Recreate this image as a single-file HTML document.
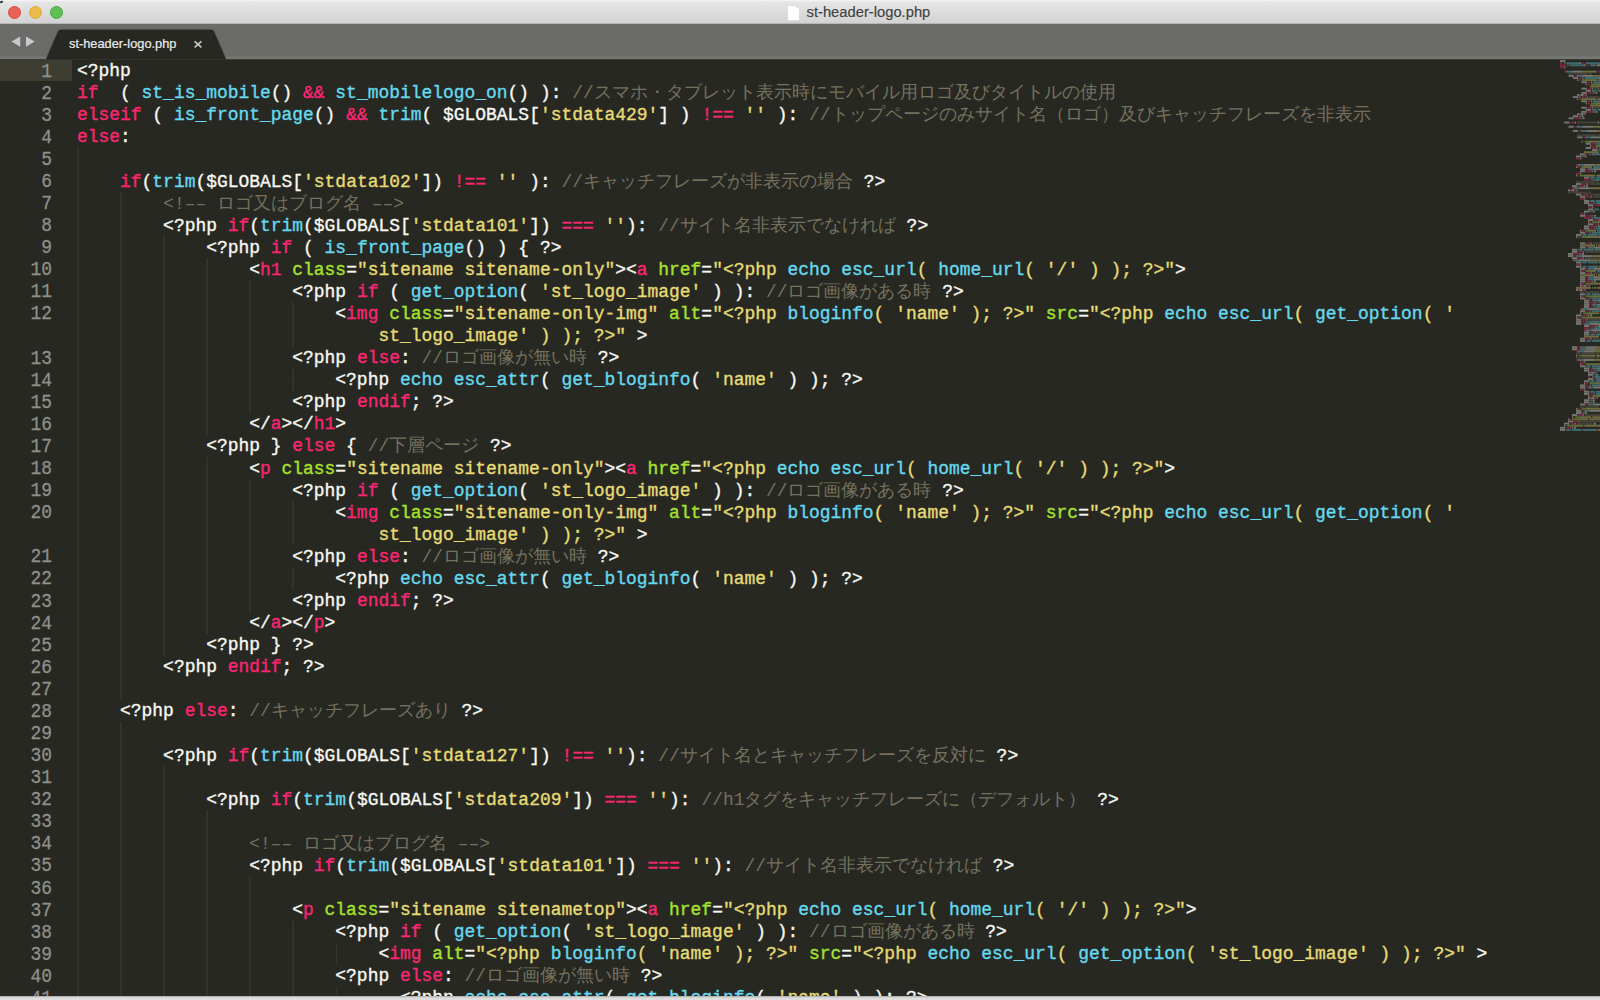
<!DOCTYPE html>
<html><head><meta charset="utf-8">
<style>
html,body{margin:0;padding:0;}
body{width:1600px;height:1000px;overflow:hidden;position:relative;background:#272822;font-family:"Liberation Mono",monospace;}
#title{position:absolute;left:0;top:0;width:1600px;height:24px;background:linear-gradient(#f7f7f7 0,#e6e6e6 2px,#d2d2d2 23px,#9a9a9a 24px);}
#title .t{position:absolute;left:806.5px;top:4px;font-family:"Liberation Sans",sans-serif;font-size:14.75px;color:#404040;-webkit-text-stroke:0.15px #404040;}
.tl{position:absolute;top:5.5px;width:13px;height:13px;border-radius:50%;}
#tabbar{position:absolute;left:0;top:24px;width:1600px;height:36px;background:linear-gradient(#6b6b69 0,#6b6b69 32.4px,#787873 32.6px,#777772 35.2px,#272822 35.6px);}
#tabs{position:absolute;left:0;top:24px;}
.tabtxt{position:absolute;left:69px;top:35.8px;font-family:"Liberation Sans",sans-serif;font-size:12.8px;color:#ececec;-webkit-text-stroke:0.2px #ececec;}
#editor{position:absolute;left:0;top:59.6px;width:1600px;height:935px;background:#272822;}
.ln{position:absolute;left:77.0px;margin-top:0.5px;-webkit-text-stroke:0.35px currentColor;height:22.08px;line-height:22.08px;font-size:17.945px;white-space:pre;color:#f8f8f2;}
.ln span{-webkit-text-stroke:0.35px currentColor;}
.ln span.c{-webkit-text-stroke:0;transform:none;}
.ln span{display:inline-block;transform:scaleY(1.07);transform-origin:0 16.9px;}
.num{position:absolute;left:0;width:52px;text-align:right;height:22.08px;line-height:22.08px;font-size:17.945px;color:#90908a;-webkit-text-stroke:0.25px #90908a;transform:translateY(0.7px) scaleY(1.1);transform-origin:0 16.6px;}
.curbg{position:absolute;left:0;top:59.8px;width:72px;height:21.2px;background:#3e3d32;}
.g{position:absolute;width:1.6px;margin-left:0.1px;height:22.08px;background:#33332c;}
.k{color:#f92672}.f{color:#66d9ef}.s{color:#e6db74}.a{color:#a6e22e}.c{color:#75715e}
#bottom{position:absolute;left:0;top:995.5px;width:1600px;height:4.5px;background:linear-gradient(#b4b4b4 0,#bcbcbc 1.3px,#dcdcdc 1.6px,#e0e0e0 100%);}
</style></head><body>
<div id="title">
 <div style="position:absolute;left:0;top:0.8px;width:2.6px;height:1.6px;background:#2a2a38;border-radius:0 1px 1px 0;transform:rotate(-20deg)"></div>
 <div class="tl" style="left:8px;background:#ec6158;border:0.6px solid #d64a40;box-sizing:border-box"></div>
 <div class="tl" style="left:29px;background:#ebbb4e;border:0.6px solid #dba83c;box-sizing:border-box"></div>
 <div class="tl" style="left:50px;background:#5ec153;border:0.6px solid #44a83b;box-sizing:border-box"></div>
 <svg style="position:absolute;left:787px;top:5px" width="13" height="16" viewBox="0 0 13 16"><path d="M0.5 0.5H8.5L12.5 4.5V15.5H0.5Z" fill="#fff" stroke="#d0d0d0" stroke-width="0.6"/></svg>
 <div class="t">st-header-logo.php</div>
</div>
<div id="tabbar"></div>
<svg id="tabs" width="260" height="36" viewBox="0 0 260 36">
 <path d="M45.3 36.2L57.6 7.6Q58.9 5.3 62 5.3L210 5.3Q213.1 5.3 214.4 7.6L226.7 36.2Z" fill="#272822" stroke="#5e5e5c" stroke-width="0.6"/>
 <path d="M20.2 12.5L11.5 17.6L20.2 22.8Z" fill="#c9c9c9"/>
 <path d="M26 12.5L34.7 17.6L26 22.8Z" fill="#c9c9c9"/>
 <path d="M194.6 17.3L201.4 23.4M201.4 17.3L194.6 23.4" stroke="#c4c4bc" stroke-width="1.7"/>
</svg>
<div class="tabtxt">st-header-logo.php</div>
<div id="editor"></div>
<div class="curbg"></div>
<div class="g" style="left:77.00px;top:147.92px"></div>
<div class="g" style="left:77.00px;top:170.00px"></div>
<div class="g" style="left:77.00px;top:192.08px"></div>
<div class="g" style="left:120.08px;top:192.08px"></div>
<div class="g" style="left:77.00px;top:214.16px"></div>
<div class="g" style="left:120.08px;top:214.16px"></div>
<div class="g" style="left:77.00px;top:236.24px"></div>
<div class="g" style="left:120.08px;top:236.24px"></div>
<div class="g" style="left:163.15px;top:236.24px"></div>
<div class="g" style="left:77.00px;top:258.32px"></div>
<div class="g" style="left:120.08px;top:258.32px"></div>
<div class="g" style="left:163.15px;top:258.32px"></div>
<div class="g" style="left:206.23px;top:258.32px"></div>
<div class="g" style="left:77.00px;top:280.40px"></div>
<div class="g" style="left:120.08px;top:280.40px"></div>
<div class="g" style="left:163.15px;top:280.40px"></div>
<div class="g" style="left:206.23px;top:280.40px"></div>
<div class="g" style="left:249.30px;top:280.40px"></div>
<div class="g" style="left:77.00px;top:302.48px"></div>
<div class="g" style="left:120.08px;top:302.48px"></div>
<div class="g" style="left:163.15px;top:302.48px"></div>
<div class="g" style="left:206.23px;top:302.48px"></div>
<div class="g" style="left:249.30px;top:302.48px"></div>
<div class="g" style="left:292.38px;top:302.48px"></div>
<div class="g" style="left:77.00px;top:324.56px"></div>
<div class="g" style="left:120.08px;top:324.56px"></div>
<div class="g" style="left:163.15px;top:324.56px"></div>
<div class="g" style="left:206.23px;top:324.56px"></div>
<div class="g" style="left:249.30px;top:324.56px"></div>
<div class="g" style="left:292.38px;top:324.56px"></div>
<div class="g" style="left:77.00px;top:346.64px"></div>
<div class="g" style="left:120.08px;top:346.64px"></div>
<div class="g" style="left:163.15px;top:346.64px"></div>
<div class="g" style="left:206.23px;top:346.64px"></div>
<div class="g" style="left:249.30px;top:346.64px"></div>
<div class="g" style="left:77.00px;top:368.72px"></div>
<div class="g" style="left:120.08px;top:368.72px"></div>
<div class="g" style="left:163.15px;top:368.72px"></div>
<div class="g" style="left:206.23px;top:368.72px"></div>
<div class="g" style="left:249.30px;top:368.72px"></div>
<div class="g" style="left:292.38px;top:368.72px"></div>
<div class="g" style="left:77.00px;top:390.80px"></div>
<div class="g" style="left:120.08px;top:390.80px"></div>
<div class="g" style="left:163.15px;top:390.80px"></div>
<div class="g" style="left:206.23px;top:390.80px"></div>
<div class="g" style="left:249.30px;top:390.80px"></div>
<div class="g" style="left:77.00px;top:412.88px"></div>
<div class="g" style="left:120.08px;top:412.88px"></div>
<div class="g" style="left:163.15px;top:412.88px"></div>
<div class="g" style="left:206.23px;top:412.88px"></div>
<div class="g" style="left:77.00px;top:434.96px"></div>
<div class="g" style="left:120.08px;top:434.96px"></div>
<div class="g" style="left:163.15px;top:434.96px"></div>
<div class="g" style="left:77.00px;top:457.04px"></div>
<div class="g" style="left:120.08px;top:457.04px"></div>
<div class="g" style="left:163.15px;top:457.04px"></div>
<div class="g" style="left:206.23px;top:457.04px"></div>
<div class="g" style="left:77.00px;top:479.12px"></div>
<div class="g" style="left:120.08px;top:479.12px"></div>
<div class="g" style="left:163.15px;top:479.12px"></div>
<div class="g" style="left:206.23px;top:479.12px"></div>
<div class="g" style="left:249.30px;top:479.12px"></div>
<div class="g" style="left:77.00px;top:501.20px"></div>
<div class="g" style="left:120.08px;top:501.20px"></div>
<div class="g" style="left:163.15px;top:501.20px"></div>
<div class="g" style="left:206.23px;top:501.20px"></div>
<div class="g" style="left:249.30px;top:501.20px"></div>
<div class="g" style="left:292.38px;top:501.20px"></div>
<div class="g" style="left:77.00px;top:523.28px"></div>
<div class="g" style="left:120.08px;top:523.28px"></div>
<div class="g" style="left:163.15px;top:523.28px"></div>
<div class="g" style="left:206.23px;top:523.28px"></div>
<div class="g" style="left:249.30px;top:523.28px"></div>
<div class="g" style="left:292.38px;top:523.28px"></div>
<div class="g" style="left:77.00px;top:545.36px"></div>
<div class="g" style="left:120.08px;top:545.36px"></div>
<div class="g" style="left:163.15px;top:545.36px"></div>
<div class="g" style="left:206.23px;top:545.36px"></div>
<div class="g" style="left:249.30px;top:545.36px"></div>
<div class="g" style="left:77.00px;top:567.44px"></div>
<div class="g" style="left:120.08px;top:567.44px"></div>
<div class="g" style="left:163.15px;top:567.44px"></div>
<div class="g" style="left:206.23px;top:567.44px"></div>
<div class="g" style="left:249.30px;top:567.44px"></div>
<div class="g" style="left:292.38px;top:567.44px"></div>
<div class="g" style="left:77.00px;top:589.52px"></div>
<div class="g" style="left:120.08px;top:589.52px"></div>
<div class="g" style="left:163.15px;top:589.52px"></div>
<div class="g" style="left:206.23px;top:589.52px"></div>
<div class="g" style="left:249.30px;top:589.52px"></div>
<div class="g" style="left:77.00px;top:611.60px"></div>
<div class="g" style="left:120.08px;top:611.60px"></div>
<div class="g" style="left:163.15px;top:611.60px"></div>
<div class="g" style="left:206.23px;top:611.60px"></div>
<div class="g" style="left:77.00px;top:633.68px"></div>
<div class="g" style="left:120.08px;top:633.68px"></div>
<div class="g" style="left:163.15px;top:633.68px"></div>
<div class="g" style="left:77.00px;top:655.76px"></div>
<div class="g" style="left:120.08px;top:655.76px"></div>
<div class="g" style="left:77.00px;top:677.84px"></div>
<div class="g" style="left:120.08px;top:677.84px"></div>
<div class="g" style="left:77.00px;top:699.92px"></div>
<div class="g" style="left:77.00px;top:722.00px"></div>
<div class="g" style="left:120.08px;top:722.00px"></div>
<div class="g" style="left:77.00px;top:744.08px"></div>
<div class="g" style="left:120.08px;top:744.08px"></div>
<div class="g" style="left:77.00px;top:766.16px"></div>
<div class="g" style="left:120.08px;top:766.16px"></div>
<div class="g" style="left:163.15px;top:766.16px"></div>
<div class="g" style="left:77.00px;top:788.24px"></div>
<div class="g" style="left:120.08px;top:788.24px"></div>
<div class="g" style="left:163.15px;top:788.24px"></div>
<div class="g" style="left:77.00px;top:810.32px"></div>
<div class="g" style="left:120.08px;top:810.32px"></div>
<div class="g" style="left:163.15px;top:810.32px"></div>
<div class="g" style="left:206.23px;top:810.32px"></div>
<div class="g" style="left:77.00px;top:832.40px"></div>
<div class="g" style="left:120.08px;top:832.40px"></div>
<div class="g" style="left:163.15px;top:832.40px"></div>
<div class="g" style="left:206.23px;top:832.40px"></div>
<div class="g" style="left:77.00px;top:854.48px"></div>
<div class="g" style="left:120.08px;top:854.48px"></div>
<div class="g" style="left:163.15px;top:854.48px"></div>
<div class="g" style="left:206.23px;top:854.48px"></div>
<div class="g" style="left:77.00px;top:876.56px"></div>
<div class="g" style="left:120.08px;top:876.56px"></div>
<div class="g" style="left:163.15px;top:876.56px"></div>
<div class="g" style="left:206.23px;top:876.56px"></div>
<div class="g" style="left:249.30px;top:876.56px"></div>
<div class="g" style="left:77.00px;top:898.64px"></div>
<div class="g" style="left:120.08px;top:898.64px"></div>
<div class="g" style="left:163.15px;top:898.64px"></div>
<div class="g" style="left:206.23px;top:898.64px"></div>
<div class="g" style="left:249.30px;top:898.64px"></div>
<div class="g" style="left:77.00px;top:920.72px"></div>
<div class="g" style="left:120.08px;top:920.72px"></div>
<div class="g" style="left:163.15px;top:920.72px"></div>
<div class="g" style="left:206.23px;top:920.72px"></div>
<div class="g" style="left:249.30px;top:920.72px"></div>
<div class="g" style="left:292.38px;top:920.72px"></div>
<div class="g" style="left:77.00px;top:942.80px"></div>
<div class="g" style="left:120.08px;top:942.80px"></div>
<div class="g" style="left:163.15px;top:942.80px"></div>
<div class="g" style="left:206.23px;top:942.80px"></div>
<div class="g" style="left:249.30px;top:942.80px"></div>
<div class="g" style="left:292.38px;top:942.80px"></div>
<div class="g" style="left:335.46px;top:942.80px"></div>
<div class="g" style="left:77.00px;top:964.88px"></div>
<div class="g" style="left:120.08px;top:964.88px"></div>
<div class="g" style="left:163.15px;top:964.88px"></div>
<div class="g" style="left:206.23px;top:964.88px"></div>
<div class="g" style="left:249.30px;top:964.88px"></div>
<div class="g" style="left:292.38px;top:964.88px"></div>
<div class="g" style="left:77.00px;top:986.96px"></div>
<div class="g" style="left:120.08px;top:986.96px"></div>
<div class="g" style="left:163.15px;top:986.96px"></div>
<div class="g" style="left:206.23px;top:986.96px"></div>
<div class="g" style="left:249.30px;top:986.96px"></div>
<div class="g" style="left:292.38px;top:986.96px"></div>
<div class="g" style="left:335.46px;top:986.96px"></div>
<div class="num cur" style="top:59.60px">1</div>
<div class="num" style="top:81.68px">2</div>
<div class="num" style="top:103.76px">3</div>
<div class="num" style="top:125.84px">4</div>
<div class="num" style="top:147.92px">5</div>
<div class="num" style="top:170.00px">6</div>
<div class="num" style="top:192.08px">7</div>
<div class="num" style="top:214.16px">8</div>
<div class="num" style="top:236.24px">9</div>
<div class="num" style="top:258.32px">10</div>
<div class="num" style="top:280.40px">11</div>
<div class="num" style="top:302.48px">12</div>
<div class="num" style="top:346.64px">13</div>
<div class="num" style="top:368.72px">14</div>
<div class="num" style="top:390.80px">15</div>
<div class="num" style="top:412.88px">16</div>
<div class="num" style="top:434.96px">17</div>
<div class="num" style="top:457.04px">18</div>
<div class="num" style="top:479.12px">19</div>
<div class="num" style="top:501.20px">20</div>
<div class="num" style="top:545.36px">21</div>
<div class="num" style="top:567.44px">22</div>
<div class="num" style="top:589.52px">23</div>
<div class="num" style="top:611.60px">24</div>
<div class="num" style="top:633.68px">25</div>
<div class="num" style="top:655.76px">26</div>
<div class="num" style="top:677.84px">27</div>
<div class="num" style="top:699.92px">28</div>
<div class="num" style="top:722.00px">29</div>
<div class="num" style="top:744.08px">30</div>
<div class="num" style="top:766.16px">31</div>
<div class="num" style="top:788.24px">32</div>
<div class="num" style="top:810.32px">33</div>
<div class="num" style="top:832.40px">34</div>
<div class="num" style="top:854.48px">35</div>
<div class="num" style="top:876.56px">36</div>
<div class="num" style="top:898.64px">37</div>
<div class="num" style="top:920.72px">38</div>
<div class="num" style="top:942.80px">39</div>
<div class="num" style="top:964.88px">40</div>
<div class="num" style="top:986.96px">41</div>
<div class="ln" style="top:59.60px"><span class="w">&lt;?php</span></div>
<div class="ln" style="top:81.68px"><span class="k">if</span><span class="w">  ( </span><span class="f">st_is_mobile</span><span class="w">() </span><span class="k">&amp;&amp;</span><span class="w"> </span><span class="f">st_mobilelogo_on</span><span class="w">() ): </span><span class="c">//スマホ・タブレット表示時にモバイル用ロゴ及びタイトルの使用</span></div>
<div class="ln" style="top:103.76px"><span class="k">elseif</span><span class="w"> ( </span><span class="f">is_front_page</span><span class="w">() </span><span class="k">&amp;&amp;</span><span class="w"> </span><span class="f">trim</span><span class="w">( $GLOBALS[</span><span class="s">&#x27;stdata429&#x27;</span><span class="w">] ) </span><span class="k">!==</span><span class="w"> </span><span class="s">&#x27;&#x27;</span><span class="w"> ): </span><span class="c">//トップページのみサイト名（ロゴ）及びキャッチフレーズを非表示</span></div>
<div class="ln" style="top:125.84px"><span class="k">else</span><span class="w">:</span></div>
<div class="ln" style="top:147.92px"></div>
<div class="ln" style="top:170.00px"><span class="w">    </span><span class="k">if</span><span class="w">(</span><span class="f">trim</span><span class="w">($GLOBALS[</span><span class="s">&#x27;stdata102&#x27;</span><span class="w">]) </span><span class="k">!==</span><span class="w"> </span><span class="s">&#x27;&#x27;</span><span class="w"> ): </span><span class="c">//キャッチフレーズが非表示の場合</span><span class="w"> ?&gt;</span></div>
<div class="ln" style="top:192.08px"><span class="w">        </span><span class="c">&lt;!–– ロゴ又はブログ名 ––&gt;</span></div>
<div class="ln" style="top:214.16px"><span class="w">        &lt;?php </span><span class="k">if</span><span class="w">(</span><span class="f">trim</span><span class="w">($GLOBALS[</span><span class="s">&#x27;stdata101&#x27;</span><span class="w">]) </span><span class="k">===</span><span class="w"> </span><span class="s">&#x27;&#x27;</span><span class="w">): </span><span class="c">//サイト名非表示でなければ</span><span class="w"> ?&gt;</span></div>
<div class="ln" style="top:236.24px"><span class="w">            &lt;?php </span><span class="k">if</span><span class="w"> ( </span><span class="f">is_front_page</span><span class="w">() ) { ?&gt;</span></div>
<div class="ln" style="top:258.32px"><span class="w">                &lt;</span><span class="k">h1</span><span class="w"> </span><span class="a">class</span><span class="w">=</span><span class="s">&quot;sitename sitename-only&quot;</span><span class="w">&gt;&lt;</span><span class="k">a</span><span class="w"> </span><span class="a">href</span><span class="w">=</span><span class="s">&quot;&lt;?php </span><span class="f">echo</span><span class="w"> </span><span class="f">esc_url</span><span class="s">( </span><span class="f">home_url</span><span class="s">( &#x27;/&#x27; ) ); ?&gt;&quot;</span><span class="w">&gt;</span></div>
<div class="ln" style="top:280.40px"><span class="w">                    &lt;?php </span><span class="k">if</span><span class="w"> ( </span><span class="f">get_option</span><span class="w">( </span><span class="s">&#x27;st_logo_image&#x27;</span><span class="w"> ) ): </span><span class="c">//ロゴ画像がある時</span><span class="w"> ?&gt;</span></div>
<div class="ln" style="top:302.48px"><span class="w">                        &lt;</span><span class="k">img</span><span class="w"> </span><span class="a">class</span><span class="w">=</span><span class="s">&quot;sitename-only-img&quot;</span><span class="w"> </span><span class="a">alt</span><span class="w">=</span><span class="s">&quot;&lt;?php </span><span class="f">bloginfo</span><span class="s">( &#x27;name&#x27; ); ?&gt;&quot;</span><span class="w"> </span><span class="a">src</span><span class="w">=</span><span class="s">&quot;&lt;?php </span><span class="f">echo</span><span class="w"> </span><span class="f">esc_url</span><span class="s">( </span><span class="f">get_option</span><span class="s">( &#x27;</span></div>
<div class="ln" style="top:324.56px"><span class="w">                            </span><span class="s">st_logo_image&#x27; ) ); ?&gt;&quot;</span><span class="w"> &gt;</span></div>
<div class="ln" style="top:346.64px"><span class="w">                    &lt;?php </span><span class="k">else</span><span class="w">: </span><span class="c">//ロゴ画像が無い時</span><span class="w"> ?&gt;</span></div>
<div class="ln" style="top:368.72px"><span class="w">                        &lt;?php </span><span class="f">echo</span><span class="w"> </span><span class="f">esc_attr</span><span class="w">( </span><span class="f">get_bloginfo</span><span class="w">( </span><span class="s">&#x27;name&#x27;</span><span class="w"> ) ); ?&gt;</span></div>
<div class="ln" style="top:390.80px"><span class="w">                    &lt;?php </span><span class="k">endif</span><span class="w">; ?&gt;</span></div>
<div class="ln" style="top:412.88px"><span class="w">                &lt;/</span><span class="k">a</span><span class="w">&gt;&lt;/</span><span class="k">h1</span><span class="w">&gt;</span></div>
<div class="ln" style="top:434.96px"><span class="w">            &lt;?php } </span><span class="k">else</span><span class="w"> { </span><span class="c">//下層ページ</span><span class="w"> ?&gt;</span></div>
<div class="ln" style="top:457.04px"><span class="w">                &lt;</span><span class="k">p</span><span class="w"> </span><span class="a">class</span><span class="w">=</span><span class="s">&quot;sitename sitename-only&quot;</span><span class="w">&gt;&lt;</span><span class="k">a</span><span class="w"> </span><span class="a">href</span><span class="w">=</span><span class="s">&quot;&lt;?php </span><span class="f">echo</span><span class="w"> </span><span class="f">esc_url</span><span class="s">( </span><span class="f">home_url</span><span class="s">( &#x27;/&#x27; ) ); ?&gt;&quot;</span><span class="w">&gt;</span></div>
<div class="ln" style="top:479.12px"><span class="w">                    &lt;?php </span><span class="k">if</span><span class="w"> ( </span><span class="f">get_option</span><span class="w">( </span><span class="s">&#x27;st_logo_image&#x27;</span><span class="w"> ) ): </span><span class="c">//ロゴ画像がある時</span><span class="w"> ?&gt;</span></div>
<div class="ln" style="top:501.20px"><span class="w">                        &lt;</span><span class="k">img</span><span class="w"> </span><span class="a">class</span><span class="w">=</span><span class="s">&quot;sitename-only-img&quot;</span><span class="w"> </span><span class="a">alt</span><span class="w">=</span><span class="s">&quot;&lt;?php </span><span class="f">bloginfo</span><span class="s">( &#x27;name&#x27; ); ?&gt;&quot;</span><span class="w"> </span><span class="a">src</span><span class="w">=</span><span class="s">&quot;&lt;?php </span><span class="f">echo</span><span class="w"> </span><span class="f">esc_url</span><span class="s">( </span><span class="f">get_option</span><span class="s">( &#x27;</span></div>
<div class="ln" style="top:523.28px"><span class="w">                            </span><span class="s">st_logo_image&#x27; ) ); ?&gt;&quot;</span><span class="w"> &gt;</span></div>
<div class="ln" style="top:545.36px"><span class="w">                    &lt;?php </span><span class="k">else</span><span class="w">: </span><span class="c">//ロゴ画像が無い時</span><span class="w"> ?&gt;</span></div>
<div class="ln" style="top:567.44px"><span class="w">                        &lt;?php </span><span class="f">echo</span><span class="w"> </span><span class="f">esc_attr</span><span class="w">( </span><span class="f">get_bloginfo</span><span class="w">( </span><span class="s">&#x27;name&#x27;</span><span class="w"> ) ); ?&gt;</span></div>
<div class="ln" style="top:589.52px"><span class="w">                    &lt;?php </span><span class="k">endif</span><span class="w">; ?&gt;</span></div>
<div class="ln" style="top:611.60px"><span class="w">                &lt;/</span><span class="k">a</span><span class="w">&gt;&lt;/</span><span class="k">p</span><span class="w">&gt;</span></div>
<div class="ln" style="top:633.68px"><span class="w">            &lt;?php } ?&gt;</span></div>
<div class="ln" style="top:655.76px"><span class="w">        &lt;?php </span><span class="k">endif</span><span class="w">; ?&gt;</span></div>
<div class="ln" style="top:677.84px"></div>
<div class="ln" style="top:699.92px"><span class="w">    &lt;?php </span><span class="k">else</span><span class="w">: </span><span class="c">//キャッチフレーズあり</span><span class="w"> ?&gt;</span></div>
<div class="ln" style="top:722.00px"></div>
<div class="ln" style="top:744.08px"><span class="w">        &lt;?php </span><span class="k">if</span><span class="w">(</span><span class="f">trim</span><span class="w">($GLOBALS[</span><span class="s">&#x27;stdata127&#x27;</span><span class="w">]) </span><span class="k">!==</span><span class="w"> </span><span class="s">&#x27;&#x27;</span><span class="w">): </span><span class="c">//サイト名とキャッチフレーズを反対に</span><span class="w"> ?&gt;</span></div>
<div class="ln" style="top:766.16px"></div>
<div class="ln" style="top:788.24px"><span class="w">            &lt;?php </span><span class="k">if</span><span class="w">(</span><span class="f">trim</span><span class="w">($GLOBALS[</span><span class="s">&#x27;stdata209&#x27;</span><span class="w">]) </span><span class="k">===</span><span class="w"> </span><span class="s">&#x27;&#x27;</span><span class="w">): </span><span class="c">//h1タグをキャッチフレーズに（デフォルト）</span><span class="w"> ?&gt;</span></div>
<div class="ln" style="top:810.32px"></div>
<div class="ln" style="top:832.40px"><span class="w">                </span><span class="c">&lt;!–– ロゴ又はブログ名 ––&gt;</span></div>
<div class="ln" style="top:854.48px"><span class="w">                &lt;?php </span><span class="k">if</span><span class="w">(</span><span class="f">trim</span><span class="w">($GLOBALS[</span><span class="s">&#x27;stdata101&#x27;</span><span class="w">]) </span><span class="k">===</span><span class="w"> </span><span class="s">&#x27;&#x27;</span><span class="w">): </span><span class="c">//サイト名非表示でなければ</span><span class="w"> ?&gt;</span></div>
<div class="ln" style="top:876.56px"></div>
<div class="ln" style="top:898.64px"><span class="w">                    &lt;</span><span class="k">p</span><span class="w"> </span><span class="a">class</span><span class="w">=</span><span class="s">&quot;sitename sitenametop&quot;</span><span class="w">&gt;&lt;</span><span class="k">a</span><span class="w"> </span><span class="a">href</span><span class="w">=</span><span class="s">&quot;&lt;?php </span><span class="f">echo</span><span class="w"> </span><span class="f">esc_url</span><span class="s">( </span><span class="f">home_url</span><span class="s">( &#x27;/&#x27; ) ); ?&gt;&quot;</span><span class="w">&gt;</span></div>
<div class="ln" style="top:920.72px"><span class="w">                        &lt;?php </span><span class="k">if</span><span class="w"> ( </span><span class="f">get_option</span><span class="w">( </span><span class="s">&#x27;st_logo_image&#x27;</span><span class="w"> ) ): </span><span class="c">//ロゴ画像がある時</span><span class="w"> ?&gt;</span></div>
<div class="ln" style="top:942.80px"><span class="w">                            &lt;</span><span class="k">img</span><span class="w"> </span><span class="a">alt</span><span class="w">=</span><span class="s">&quot;&lt;?php </span><span class="f">bloginfo</span><span class="s">( &#x27;name&#x27; ); ?&gt;&quot;</span><span class="w"> </span><span class="a">src</span><span class="w">=</span><span class="s">&quot;&lt;?php </span><span class="f">echo</span><span class="w"> </span><span class="f">esc_url</span><span class="s">( </span><span class="f">get_option</span><span class="s">( &#x27;st_logo_image&#x27; ) ); ?&gt;&quot;</span><span class="w"> &gt;</span></div>
<div class="ln" style="top:964.88px"><span class="w">                        &lt;?php </span><span class="k">else</span><span class="w">: </span><span class="c">//ロゴ画像が無い時</span><span class="w"> ?&gt;</span></div>
<div class="ln" style="top:986.96px"><span class="w">                              &lt;?php </span><span class="f">echo</span><span class="w"> </span><span class="f">esc_attr</span><span class="w">( </span><span class="f">get_bloginfo</span><span class="w">( </span><span class="s">&#x27;name&#x27;</span><span class="w"> ) ); ?&gt;</span></div>
<svg style="position:absolute;left:1555px;top:55px" width="45" height="380" viewBox="1555 55 45 380">
<rect x="1560.00" y="60.10" width="5.35" height="1.9" fill="#f8f8f2" opacity="0.38"/>
<rect x="1560.00" y="62.22" width="2.14" height="1.9" fill="#f92672" opacity="0.38"/>
<rect x="1564.28" y="62.22" width="1.07" height="1.9" fill="#f8f8f2" opacity="0.38"/>
<rect x="1566.42" y="62.22" width="12.84" height="1.9" fill="#66d9ef" opacity="0.38"/>
<rect x="1579.26" y="62.22" width="2.14" height="1.9" fill="#f8f8f2" opacity="0.38"/>
<rect x="1582.47" y="62.22" width="2.14" height="1.9" fill="#f92672" opacity="0.38"/>
<rect x="1585.68" y="62.22" width="14.98" height="1.9" fill="#66d9ef" opacity="0.38"/>
<rect x="1560.00" y="64.34" width="6.42" height="1.9" fill="#f92672" opacity="0.38"/>
<rect x="1567.49" y="64.34" width="1.07" height="1.9" fill="#f8f8f2" opacity="0.38"/>
<rect x="1569.63" y="64.34" width="13.91" height="1.9" fill="#66d9ef" opacity="0.38"/>
<rect x="1583.54" y="64.34" width="2.14" height="1.9" fill="#f8f8f2" opacity="0.38"/>
<rect x="1586.75" y="64.34" width="2.14" height="1.9" fill="#f92672" opacity="0.38"/>
<rect x="1589.96" y="64.34" width="4.28" height="1.9" fill="#66d9ef" opacity="0.38"/>
<rect x="1594.24" y="64.34" width="1.07" height="1.9" fill="#f8f8f2" opacity="0.38"/>
<rect x="1596.38" y="64.34" width="4.28" height="1.9" fill="#f8f8f2" opacity="0.38"/>
<rect x="1560.00" y="66.46" width="4.28" height="1.9" fill="#f92672" opacity="0.38"/>
<rect x="1564.28" y="66.46" width="1.07" height="1.9" fill="#f8f8f2" opacity="0.38"/>
<rect x="1564.28" y="70.70" width="2.14" height="1.9" fill="#f92672" opacity="0.38"/>
<rect x="1566.42" y="70.70" width="1.07" height="1.9" fill="#f8f8f2" opacity="0.38"/>
<rect x="1567.49" y="70.70" width="4.28" height="1.9" fill="#66d9ef" opacity="0.38"/>
<rect x="1571.77" y="70.70" width="10.70" height="1.9" fill="#f8f8f2" opacity="0.38"/>
<rect x="1582.47" y="70.70" width="11.77" height="1.9" fill="#e6db74" opacity="0.38"/>
<rect x="1594.24" y="70.70" width="2.14" height="1.9" fill="#f8f8f2" opacity="0.38"/>
<rect x="1597.45" y="70.70" width="3.21" height="1.9" fill="#f92672" opacity="0.38"/>
<rect x="1568.56" y="72.82" width="4.28" height="1.9" fill="#75715e" opacity="0.38"/>
<rect x="1573.91" y="72.82" width="13.60" height="1.9" fill="#75715e" opacity="0.38"/>
<rect x="1588.58" y="72.82" width="3.21" height="1.9" fill="#75715e" opacity="0.38"/>
<rect x="1568.56" y="74.94" width="5.35" height="1.9" fill="#f8f8f2" opacity="0.38"/>
<rect x="1574.98" y="74.94" width="2.14" height="1.9" fill="#f92672" opacity="0.38"/>
<rect x="1577.12" y="74.94" width="1.07" height="1.9" fill="#f8f8f2" opacity="0.38"/>
<rect x="1578.19" y="74.94" width="4.28" height="1.9" fill="#66d9ef" opacity="0.38"/>
<rect x="1582.47" y="74.94" width="10.70" height="1.9" fill="#f8f8f2" opacity="0.38"/>
<rect x="1593.17" y="74.94" width="7.49" height="1.9" fill="#e6db74" opacity="0.38"/>
<rect x="1572.84" y="77.06" width="5.35" height="1.9" fill="#f8f8f2" opacity="0.38"/>
<rect x="1579.26" y="77.06" width="2.14" height="1.9" fill="#f92672" opacity="0.38"/>
<rect x="1582.47" y="77.06" width="1.07" height="1.9" fill="#f8f8f2" opacity="0.38"/>
<rect x="1584.61" y="77.06" width="13.91" height="1.9" fill="#66d9ef" opacity="0.38"/>
<rect x="1598.52" y="77.06" width="2.14" height="1.9" fill="#f8f8f2" opacity="0.38"/>
<rect x="1577.12" y="79.18" width="1.07" height="1.9" fill="#f8f8f2" opacity="0.38"/>
<rect x="1578.19" y="79.18" width="2.14" height="1.9" fill="#f92672" opacity="0.38"/>
<rect x="1581.40" y="79.18" width="5.35" height="1.9" fill="#a6e22e" opacity="0.38"/>
<rect x="1586.75" y="79.18" width="1.07" height="1.9" fill="#f8f8f2" opacity="0.38"/>
<rect x="1587.82" y="79.18" width="9.63" height="1.9" fill="#e6db74" opacity="0.38"/>
<rect x="1598.52" y="79.18" width="2.14" height="1.9" fill="#e6db74" opacity="0.38"/>
<rect x="1581.40" y="81.30" width="5.35" height="1.9" fill="#f8f8f2" opacity="0.38"/>
<rect x="1587.82" y="81.30" width="2.14" height="1.9" fill="#f92672" opacity="0.38"/>
<rect x="1591.03" y="81.30" width="1.07" height="1.9" fill="#f8f8f2" opacity="0.38"/>
<rect x="1593.17" y="81.30" width="7.49" height="1.9" fill="#66d9ef" opacity="0.38"/>
<rect x="1585.68" y="83.42" width="1.07" height="1.9" fill="#f8f8f2" opacity="0.38"/>
<rect x="1586.75" y="83.42" width="3.21" height="1.9" fill="#f92672" opacity="0.38"/>
<rect x="1591.03" y="83.42" width="5.35" height="1.9" fill="#a6e22e" opacity="0.38"/>
<rect x="1596.38" y="83.42" width="1.07" height="1.9" fill="#f8f8f2" opacity="0.38"/>
<rect x="1597.45" y="83.42" width="3.21" height="1.9" fill="#e6db74" opacity="0.38"/>
<rect x="1589.96" y="85.54" width="10.70" height="1.9" fill="#e6db74" opacity="0.38"/>
<rect x="1581.40" y="87.66" width="5.35" height="1.9" fill="#f8f8f2" opacity="0.38"/>
<rect x="1587.82" y="87.66" width="4.28" height="1.9" fill="#f92672" opacity="0.38"/>
<rect x="1592.10" y="87.66" width="1.07" height="1.9" fill="#f8f8f2" opacity="0.38"/>
<rect x="1594.24" y="87.66" width="7.24" height="1.9" fill="#75715e" opacity="0.38"/>
<rect x="1585.68" y="89.78" width="5.35" height="1.9" fill="#f8f8f2" opacity="0.38"/>
<rect x="1592.10" y="89.78" width="4.28" height="1.9" fill="#66d9ef" opacity="0.38"/>
<rect x="1597.45" y="89.78" width="3.21" height="1.9" fill="#66d9ef" opacity="0.38"/>
<rect x="1581.40" y="91.90" width="5.35" height="1.9" fill="#f8f8f2" opacity="0.38"/>
<rect x="1587.82" y="91.90" width="5.35" height="1.9" fill="#f92672" opacity="0.38"/>
<rect x="1593.17" y="91.90" width="1.07" height="1.9" fill="#f8f8f2" opacity="0.38"/>
<rect x="1595.31" y="91.90" width="2.14" height="1.9" fill="#f8f8f2" opacity="0.38"/>
<rect x="1577.12" y="94.02" width="2.14" height="1.9" fill="#f8f8f2" opacity="0.38"/>
<rect x="1579.26" y="94.02" width="1.07" height="1.9" fill="#f92672" opacity="0.38"/>
<rect x="1580.33" y="94.02" width="3.21" height="1.9" fill="#f8f8f2" opacity="0.38"/>
<rect x="1583.54" y="94.02" width="2.14" height="1.9" fill="#f92672" opacity="0.38"/>
<rect x="1585.68" y="94.02" width="1.07" height="1.9" fill="#f8f8f2" opacity="0.38"/>
<rect x="1572.84" y="96.14" width="5.35" height="1.9" fill="#f8f8f2" opacity="0.38"/>
<rect x="1579.26" y="96.14" width="1.07" height="1.9" fill="#f8f8f2" opacity="0.38"/>
<rect x="1581.40" y="96.14" width="4.28" height="1.9" fill="#f92672" opacity="0.38"/>
<rect x="1586.75" y="96.14" width="1.07" height="1.9" fill="#f8f8f2" opacity="0.38"/>
<rect x="1588.89" y="96.14" width="10.64" height="1.9" fill="#75715e" opacity="0.38"/>
<rect x="1577.12" y="98.26" width="1.07" height="1.9" fill="#f8f8f2" opacity="0.38"/>
<rect x="1578.19" y="98.26" width="1.07" height="1.9" fill="#f92672" opacity="0.38"/>
<rect x="1580.33" y="98.26" width="5.35" height="1.9" fill="#a6e22e" opacity="0.38"/>
<rect x="1585.68" y="98.26" width="1.07" height="1.9" fill="#f8f8f2" opacity="0.38"/>
<rect x="1586.75" y="98.26" width="9.63" height="1.9" fill="#e6db74" opacity="0.38"/>
<rect x="1597.45" y="98.26" width="3.21" height="1.9" fill="#e6db74" opacity="0.38"/>
<rect x="1581.40" y="100.38" width="5.35" height="1.9" fill="#f8f8f2" opacity="0.38"/>
<rect x="1587.82" y="100.38" width="2.14" height="1.9" fill="#f92672" opacity="0.38"/>
<rect x="1591.03" y="100.38" width="1.07" height="1.9" fill="#f8f8f2" opacity="0.38"/>
<rect x="1593.17" y="100.38" width="7.49" height="1.9" fill="#66d9ef" opacity="0.38"/>
<rect x="1585.68" y="102.50" width="1.07" height="1.9" fill="#f8f8f2" opacity="0.38"/>
<rect x="1586.75" y="102.50" width="3.21" height="1.9" fill="#f92672" opacity="0.38"/>
<rect x="1591.03" y="102.50" width="5.35" height="1.9" fill="#a6e22e" opacity="0.38"/>
<rect x="1596.38" y="102.50" width="1.07" height="1.9" fill="#f8f8f2" opacity="0.38"/>
<rect x="1597.45" y="102.50" width="3.21" height="1.9" fill="#e6db74" opacity="0.38"/>
<rect x="1589.96" y="104.62" width="10.70" height="1.9" fill="#e6db74" opacity="0.38"/>
<rect x="1581.40" y="106.74" width="5.35" height="1.9" fill="#f8f8f2" opacity="0.38"/>
<rect x="1587.82" y="106.74" width="4.28" height="1.9" fill="#f92672" opacity="0.38"/>
<rect x="1592.10" y="106.74" width="1.07" height="1.9" fill="#f8f8f2" opacity="0.38"/>
<rect x="1594.24" y="106.74" width="7.24" height="1.9" fill="#75715e" opacity="0.38"/>
<rect x="1585.68" y="108.86" width="5.35" height="1.9" fill="#f8f8f2" opacity="0.38"/>
<rect x="1592.10" y="108.86" width="4.28" height="1.9" fill="#66d9ef" opacity="0.38"/>
<rect x="1597.45" y="108.86" width="3.21" height="1.9" fill="#66d9ef" opacity="0.38"/>
<rect x="1581.40" y="110.98" width="5.35" height="1.9" fill="#f8f8f2" opacity="0.38"/>
<rect x="1587.82" y="110.98" width="5.35" height="1.9" fill="#f92672" opacity="0.38"/>
<rect x="1593.17" y="110.98" width="1.07" height="1.9" fill="#f8f8f2" opacity="0.38"/>
<rect x="1595.31" y="110.98" width="2.14" height="1.9" fill="#f8f8f2" opacity="0.38"/>
<rect x="1577.12" y="113.10" width="2.14" height="1.9" fill="#f8f8f2" opacity="0.38"/>
<rect x="1579.26" y="113.10" width="1.07" height="1.9" fill="#f92672" opacity="0.38"/>
<rect x="1580.33" y="113.10" width="3.21" height="1.9" fill="#f8f8f2" opacity="0.38"/>
<rect x="1583.54" y="113.10" width="1.07" height="1.9" fill="#f92672" opacity="0.38"/>
<rect x="1584.61" y="113.10" width="1.07" height="1.9" fill="#f8f8f2" opacity="0.38"/>
<rect x="1572.84" y="115.22" width="5.35" height="1.9" fill="#f8f8f2" opacity="0.38"/>
<rect x="1579.26" y="115.22" width="1.07" height="1.9" fill="#f8f8f2" opacity="0.38"/>
<rect x="1581.40" y="115.22" width="2.14" height="1.9" fill="#f8f8f2" opacity="0.38"/>
<rect x="1568.56" y="117.34" width="5.35" height="1.9" fill="#f8f8f2" opacity="0.38"/>
<rect x="1574.98" y="117.34" width="5.35" height="1.9" fill="#f92672" opacity="0.38"/>
<rect x="1580.33" y="117.34" width="1.07" height="1.9" fill="#f8f8f2" opacity="0.38"/>
<rect x="1582.47" y="117.34" width="2.14" height="1.9" fill="#f8f8f2" opacity="0.38"/>
<rect x="1564.28" y="121.58" width="5.35" height="1.9" fill="#f8f8f2" opacity="0.38"/>
<rect x="1570.70" y="121.58" width="4.28" height="1.9" fill="#f92672" opacity="0.38"/>
<rect x="1574.98" y="121.58" width="1.07" height="1.9" fill="#f8f8f2" opacity="0.38"/>
<rect x="1577.12" y="121.58" width="19.14" height="1.9" fill="#75715e" opacity="0.38"/>
<rect x="1597.33" y="121.58" width="2.14" height="1.9" fill="#f8f8f2" opacity="0.38"/>
<rect x="1568.56" y="125.82" width="5.35" height="1.9" fill="#f8f8f2" opacity="0.38"/>
<rect x="1574.98" y="125.82" width="2.14" height="1.9" fill="#f92672" opacity="0.38"/>
<rect x="1577.12" y="125.82" width="1.07" height="1.9" fill="#f8f8f2" opacity="0.38"/>
<rect x="1578.19" y="125.82" width="4.28" height="1.9" fill="#66d9ef" opacity="0.38"/>
<rect x="1582.47" y="125.82" width="10.70" height="1.9" fill="#f8f8f2" opacity="0.38"/>
<rect x="1593.17" y="125.82" width="7.49" height="1.9" fill="#e6db74" opacity="0.38"/>
<rect x="1572.84" y="130.06" width="5.35" height="1.9" fill="#f8f8f2" opacity="0.38"/>
<rect x="1579.26" y="130.06" width="2.14" height="1.9" fill="#f92672" opacity="0.38"/>
<rect x="1581.40" y="130.06" width="1.07" height="1.9" fill="#f8f8f2" opacity="0.38"/>
<rect x="1582.47" y="130.06" width="4.28" height="1.9" fill="#66d9ef" opacity="0.38"/>
<rect x="1586.75" y="130.06" width="10.70" height="1.9" fill="#f8f8f2" opacity="0.38"/>
<rect x="1597.45" y="130.06" width="3.21" height="1.9" fill="#e6db74" opacity="0.38"/>
<rect x="1577.12" y="134.30" width="4.28" height="1.9" fill="#75715e" opacity="0.38"/>
<rect x="1582.47" y="134.30" width="13.60" height="1.9" fill="#75715e" opacity="0.38"/>
<rect x="1597.14" y="134.30" width="3.21" height="1.9" fill="#75715e" opacity="0.38"/>
<rect x="1577.12" y="136.42" width="5.35" height="1.9" fill="#f8f8f2" opacity="0.38"/>
<rect x="1583.54" y="136.42" width="2.14" height="1.9" fill="#f92672" opacity="0.38"/>
<rect x="1585.68" y="136.42" width="1.07" height="1.9" fill="#f8f8f2" opacity="0.38"/>
<rect x="1586.75" y="136.42" width="4.28" height="1.9" fill="#66d9ef" opacity="0.38"/>
<rect x="1591.03" y="136.42" width="9.63" height="1.9" fill="#f8f8f2" opacity="0.38"/>
<rect x="1581.40" y="140.66" width="1.07" height="1.9" fill="#f8f8f2" opacity="0.38"/>
<rect x="1582.47" y="140.66" width="1.07" height="1.9" fill="#f92672" opacity="0.38"/>
<rect x="1584.61" y="140.66" width="5.35" height="1.9" fill="#a6e22e" opacity="0.38"/>
<rect x="1589.96" y="140.66" width="1.07" height="1.9" fill="#f8f8f2" opacity="0.38"/>
<rect x="1591.03" y="140.66" width="9.63" height="1.9" fill="#e6db74" opacity="0.38"/>
<rect x="1585.68" y="142.78" width="5.35" height="1.9" fill="#f8f8f2" opacity="0.38"/>
<rect x="1592.10" y="142.78" width="2.14" height="1.9" fill="#f92672" opacity="0.38"/>
<rect x="1595.31" y="142.78" width="1.07" height="1.9" fill="#f8f8f2" opacity="0.38"/>
<rect x="1597.45" y="142.78" width="3.21" height="1.9" fill="#66d9ef" opacity="0.38"/>
<rect x="1589.96" y="144.90" width="1.07" height="1.9" fill="#f8f8f2" opacity="0.38"/>
<rect x="1591.03" y="144.90" width="3.21" height="1.9" fill="#f92672" opacity="0.38"/>
<rect x="1595.31" y="144.90" width="3.21" height="1.9" fill="#a6e22e" opacity="0.38"/>
<rect x="1598.52" y="144.90" width="1.07" height="1.9" fill="#f8f8f2" opacity="0.38"/>
<rect x="1599.59" y="144.90" width="1.07" height="1.9" fill="#e6db74" opacity="0.38"/>
<rect x="1585.68" y="147.02" width="5.35" height="1.9" fill="#f8f8f2" opacity="0.38"/>
<rect x="1592.10" y="147.02" width="4.28" height="1.9" fill="#f92672" opacity="0.38"/>
<rect x="1596.38" y="147.02" width="1.07" height="1.9" fill="#f8f8f2" opacity="0.38"/>
<rect x="1598.52" y="147.02" width="2.14" height="1.9" fill="#75715e" opacity="0.38"/>
<rect x="1592.10" y="149.14" width="5.35" height="1.9" fill="#f8f8f2" opacity="0.38"/>
<rect x="1598.52" y="149.14" width="2.14" height="1.9" fill="#66d9ef" opacity="0.38"/>
<rect x="1584.00" y="151.26" width="14.98" height="1.9" fill="#e6db74" opacity="0.38"/>
<rect x="1580.00" y="153.38" width="5.35" height="1.9" fill="#f8f8f2" opacity="0.38"/>
<rect x="1586.42" y="153.38" width="2.14" height="1.9" fill="#f92672" opacity="0.38"/>
<rect x="1589.63" y="153.38" width="1.07" height="1.9" fill="#f8f8f2" opacity="0.38"/>
<rect x="1591.77" y="153.38" width="8.56" height="1.9" fill="#66d9ef" opacity="0.38"/>
<rect x="1576.00" y="155.50" width="5.35" height="1.9" fill="#f8f8f2" opacity="0.38"/>
<rect x="1582.42" y="155.50" width="1.07" height="1.9" fill="#f8f8f2" opacity="0.38"/>
<rect x="1584.56" y="155.50" width="2.14" height="1.9" fill="#f8f8f2" opacity="0.38"/>
<rect x="1576.00" y="157.62" width="4.28" height="1.9" fill="#f92672" opacity="0.38"/>
<rect x="1580.28" y="157.62" width="1.07" height="1.9" fill="#f8f8f2" opacity="0.38"/>
<rect x="1576.00" y="163.98" width="2.14" height="1.9" fill="#f92672" opacity="0.38"/>
<rect x="1578.14" y="163.98" width="1.07" height="1.9" fill="#f8f8f2" opacity="0.38"/>
<rect x="1579.21" y="163.98" width="4.28" height="1.9" fill="#66d9ef" opacity="0.38"/>
<rect x="1583.49" y="163.98" width="10.70" height="1.9" fill="#f8f8f2" opacity="0.38"/>
<rect x="1594.19" y="163.98" width="6.42" height="1.9" fill="#e6db74" opacity="0.38"/>
<rect x="1576.00" y="166.10" width="1.07" height="1.9" fill="#f8f8f2" opacity="0.38"/>
<rect x="1577.07" y="166.10" width="3.21" height="1.9" fill="#f92672" opacity="0.38"/>
<rect x="1581.35" y="166.10" width="3.21" height="1.9" fill="#a6e22e" opacity="0.38"/>
<rect x="1584.56" y="166.10" width="1.07" height="1.9" fill="#f8f8f2" opacity="0.38"/>
<rect x="1585.63" y="166.10" width="6.42" height="1.9" fill="#e6db74" opacity="0.38"/>
<rect x="1593.12" y="166.10" width="7.49" height="1.9" fill="#66d9ef" opacity="0.38"/>
<rect x="1580.00" y="168.22" width="5.35" height="1.9" fill="#f8f8f2" opacity="0.38"/>
<rect x="1586.42" y="168.22" width="2.14" height="1.9" fill="#f92672" opacity="0.38"/>
<rect x="1588.56" y="168.22" width="1.07" height="1.9" fill="#f8f8f2" opacity="0.38"/>
<rect x="1589.63" y="168.22" width="4.28" height="1.9" fill="#66d9ef" opacity="0.38"/>
<rect x="1593.91" y="168.22" width="6.42" height="1.9" fill="#f8f8f2" opacity="0.38"/>
<rect x="1580.00" y="170.34" width="5.35" height="1.9" fill="#f8f8f2" opacity="0.38"/>
<rect x="1586.42" y="170.34" width="5.35" height="1.9" fill="#f92672" opacity="0.38"/>
<rect x="1591.77" y="170.34" width="1.07" height="1.9" fill="#f8f8f2" opacity="0.38"/>
<rect x="1593.91" y="170.34" width="2.14" height="1.9" fill="#f8f8f2" opacity="0.38"/>
<rect x="1576.00" y="172.46" width="4.28" height="1.9" fill="#f92672" opacity="0.38"/>
<rect x="1580.28" y="172.46" width="1.07" height="1.9" fill="#f8f8f2" opacity="0.38"/>
<rect x="1576.00" y="174.58" width="1.07" height="1.9" fill="#f8f8f2" opacity="0.38"/>
<rect x="1577.07" y="174.58" width="1.07" height="1.9" fill="#f92672" opacity="0.38"/>
<rect x="1579.21" y="174.58" width="5.35" height="1.9" fill="#a6e22e" opacity="0.38"/>
<rect x="1584.56" y="174.58" width="1.07" height="1.9" fill="#f8f8f2" opacity="0.38"/>
<rect x="1585.63" y="174.58" width="9.63" height="1.9" fill="#e6db74" opacity="0.38"/>
<rect x="1596.33" y="174.58" width="4.28" height="1.9" fill="#e6db74" opacity="0.38"/>
<rect x="1584.00" y="176.70" width="5.35" height="1.9" fill="#f8f8f2" opacity="0.38"/>
<rect x="1590.42" y="176.70" width="4.28" height="1.9" fill="#66d9ef" opacity="0.38"/>
<rect x="1595.77" y="176.70" width="4.28" height="1.9" fill="#66d9ef" opacity="0.38"/>
<rect x="1584.00" y="178.82" width="6.42" height="1.9" fill="#f92672" opacity="0.38"/>
<rect x="1591.49" y="178.82" width="1.07" height="1.9" fill="#f8f8f2" opacity="0.38"/>
<rect x="1593.63" y="178.82" width="6.42" height="1.9" fill="#66d9ef" opacity="0.38"/>
<rect x="1576.00" y="180.94" width="4.28" height="1.9" fill="#75715e" opacity="0.38"/>
<rect x="1581.35" y="180.94" width="13.60" height="1.9" fill="#75715e" opacity="0.38"/>
<rect x="1596.02" y="180.94" width="3.21" height="1.9" fill="#75715e" opacity="0.38"/>
<rect x="1576.00" y="183.06" width="5.35" height="1.9" fill="#f8f8f2" opacity="0.38"/>
<rect x="1582.42" y="183.06" width="4.28" height="1.9" fill="#f92672" opacity="0.38"/>
<rect x="1586.70" y="183.06" width="1.07" height="1.9" fill="#f8f8f2" opacity="0.38"/>
<rect x="1588.84" y="183.06" width="12.34" height="1.9" fill="#75715e" opacity="0.38"/>
<rect x="1572.00" y="185.18" width="5.35" height="1.9" fill="#f8f8f2" opacity="0.38"/>
<rect x="1578.42" y="185.18" width="5.35" height="1.9" fill="#f92672" opacity="0.38"/>
<rect x="1583.77" y="185.18" width="1.07" height="1.9" fill="#f8f8f2" opacity="0.38"/>
<rect x="1585.91" y="185.18" width="2.14" height="1.9" fill="#f8f8f2" opacity="0.38"/>
<rect x="1572.00" y="187.30" width="2.14" height="1.9" fill="#f92672" opacity="0.38"/>
<rect x="1574.14" y="187.30" width="1.07" height="1.9" fill="#f8f8f2" opacity="0.38"/>
<rect x="1575.21" y="187.30" width="4.28" height="1.9" fill="#66d9ef" opacity="0.38"/>
<rect x="1579.49" y="187.30" width="10.70" height="1.9" fill="#f8f8f2" opacity="0.38"/>
<rect x="1590.19" y="187.30" width="10.70" height="1.9" fill="#e6db74" opacity="0.38"/>
<rect x="1568.00" y="189.42" width="2.14" height="1.9" fill="#f8f8f2" opacity="0.38"/>
<rect x="1570.14" y="189.42" width="1.07" height="1.9" fill="#f92672" opacity="0.38"/>
<rect x="1571.21" y="189.42" width="3.21" height="1.9" fill="#f8f8f2" opacity="0.38"/>
<rect x="1574.42" y="189.42" width="2.14" height="1.9" fill="#f92672" opacity="0.38"/>
<rect x="1576.56" y="189.42" width="1.07" height="1.9" fill="#f8f8f2" opacity="0.38"/>
<rect x="1568.00" y="191.54" width="4.28" height="1.9" fill="#75715e" opacity="0.38"/>
<rect x="1573.35" y="191.54" width="13.60" height="1.9" fill="#75715e" opacity="0.38"/>
<rect x="1588.02" y="191.54" width="3.21" height="1.9" fill="#75715e" opacity="0.38"/>
<rect x="1576.00" y="193.66" width="5.35" height="1.9" fill="#f8f8f2" opacity="0.38"/>
<rect x="1582.42" y="193.66" width="4.28" height="1.9" fill="#f92672" opacity="0.38"/>
<rect x="1586.70" y="193.66" width="1.07" height="1.9" fill="#f8f8f2" opacity="0.38"/>
<rect x="1588.84" y="193.66" width="12.34" height="1.9" fill="#75715e" opacity="0.38"/>
<rect x="1580.00" y="195.78" width="5.35" height="1.9" fill="#f8f8f2" opacity="0.38"/>
<rect x="1586.42" y="195.78" width="4.28" height="1.9" fill="#f92672" opacity="0.38"/>
<rect x="1590.70" y="195.78" width="1.07" height="1.9" fill="#f8f8f2" opacity="0.38"/>
<rect x="1592.84" y="195.78" width="7.24" height="1.9" fill="#75715e" opacity="0.38"/>
<rect x="1580.00" y="197.90" width="4.28" height="1.9" fill="#f92672" opacity="0.38"/>
<rect x="1584.28" y="197.90" width="1.07" height="1.9" fill="#f8f8f2" opacity="0.38"/>
<rect x="1584.00" y="200.02" width="5.35" height="1.9" fill="#f8f8f2" opacity="0.38"/>
<rect x="1590.42" y="200.02" width="4.28" height="1.9" fill="#66d9ef" opacity="0.38"/>
<rect x="1595.77" y="200.02" width="4.28" height="1.9" fill="#66d9ef" opacity="0.38"/>
<rect x="1584.00" y="202.14" width="5.35" height="1.9" fill="#f8f8f2" opacity="0.38"/>
<rect x="1590.42" y="202.14" width="2.14" height="1.9" fill="#f92672" opacity="0.38"/>
<rect x="1593.63" y="202.14" width="1.07" height="1.9" fill="#f8f8f2" opacity="0.38"/>
<rect x="1595.77" y="202.14" width="4.28" height="1.9" fill="#66d9ef" opacity="0.38"/>
<rect x="1588.00" y="204.26" width="5.35" height="1.9" fill="#f8f8f2" opacity="0.38"/>
<rect x="1594.42" y="204.26" width="5.35" height="1.9" fill="#f92672" opacity="0.38"/>
<rect x="1599.77" y="204.26" width="1.07" height="1.9" fill="#f8f8f2" opacity="0.38"/>
<rect x="1588.00" y="206.38" width="4.28" height="1.9" fill="#f92672" opacity="0.38"/>
<rect x="1592.28" y="206.38" width="1.07" height="1.9" fill="#f8f8f2" opacity="0.38"/>
<rect x="1588.00" y="208.50" width="5.35" height="1.9" fill="#f8f8f2" opacity="0.38"/>
<rect x="1594.42" y="208.50" width="4.28" height="1.9" fill="#66d9ef" opacity="0.38"/>
<rect x="1599.77" y="208.50" width="1.07" height="1.9" fill="#66d9ef" opacity="0.38"/>
<rect x="1584.00" y="210.62" width="5.35" height="1.9" fill="#f8f8f2" opacity="0.38"/>
<rect x="1590.42" y="210.62" width="1.07" height="1.9" fill="#f8f8f2" opacity="0.38"/>
<rect x="1592.56" y="210.62" width="2.14" height="1.9" fill="#f8f8f2" opacity="0.38"/>
<rect x="1580.00" y="212.74" width="4.28" height="1.9" fill="#f92672" opacity="0.38"/>
<rect x="1584.28" y="212.74" width="1.07" height="1.9" fill="#f8f8f2" opacity="0.38"/>
<rect x="1580.00" y="214.86" width="5.35" height="1.9" fill="#f8f8f2" opacity="0.38"/>
<rect x="1586.42" y="214.86" width="5.35" height="1.9" fill="#f92672" opacity="0.38"/>
<rect x="1591.77" y="214.86" width="1.07" height="1.9" fill="#f8f8f2" opacity="0.38"/>
<rect x="1593.91" y="214.86" width="2.14" height="1.9" fill="#f8f8f2" opacity="0.38"/>
<rect x="1584.00" y="216.98" width="6.42" height="1.9" fill="#f92672" opacity="0.38"/>
<rect x="1591.49" y="216.98" width="1.07" height="1.9" fill="#f8f8f2" opacity="0.38"/>
<rect x="1593.63" y="216.98" width="6.42" height="1.9" fill="#66d9ef" opacity="0.38"/>
<rect x="1588.00" y="219.10" width="5.35" height="1.9" fill="#f8f8f2" opacity="0.38"/>
<rect x="1594.42" y="219.10" width="4.28" height="1.9" fill="#f92672" opacity="0.38"/>
<rect x="1598.70" y="219.10" width="1.07" height="1.9" fill="#f8f8f2" opacity="0.38"/>
<rect x="1588.00" y="221.22" width="1.07" height="1.9" fill="#f8f8f2" opacity="0.38"/>
<rect x="1589.07" y="221.22" width="2.14" height="1.9" fill="#f92672" opacity="0.38"/>
<rect x="1592.28" y="221.22" width="5.35" height="1.9" fill="#a6e22e" opacity="0.38"/>
<rect x="1597.63" y="221.22" width="1.07" height="1.9" fill="#f8f8f2" opacity="0.38"/>
<rect x="1598.70" y="221.22" width="2.14" height="1.9" fill="#e6db74" opacity="0.38"/>
<rect x="1588.00" y="223.34" width="5.35" height="1.9" fill="#f8f8f2" opacity="0.38"/>
<rect x="1594.42" y="223.34" width="2.14" height="1.9" fill="#f92672" opacity="0.38"/>
<rect x="1597.63" y="223.34" width="1.07" height="1.9" fill="#f8f8f2" opacity="0.38"/>
<rect x="1599.77" y="223.34" width="1.07" height="1.9" fill="#66d9ef" opacity="0.38"/>
<rect x="1584.00" y="225.46" width="5.35" height="1.9" fill="#f8f8f2" opacity="0.38"/>
<rect x="1590.42" y="225.46" width="5.35" height="1.9" fill="#f92672" opacity="0.38"/>
<rect x="1595.77" y="225.46" width="1.07" height="1.9" fill="#f8f8f2" opacity="0.38"/>
<rect x="1597.91" y="225.46" width="2.14" height="1.9" fill="#f8f8f2" opacity="0.38"/>
<rect x="1584.00" y="227.58" width="5.35" height="1.9" fill="#f8f8f2" opacity="0.38"/>
<rect x="1590.42" y="227.58" width="2.14" height="1.9" fill="#f92672" opacity="0.38"/>
<rect x="1593.63" y="227.58" width="1.07" height="1.9" fill="#f8f8f2" opacity="0.38"/>
<rect x="1595.77" y="227.58" width="4.28" height="1.9" fill="#66d9ef" opacity="0.38"/>
<rect x="1580.00" y="229.70" width="1.07" height="1.9" fill="#f8f8f2" opacity="0.38"/>
<rect x="1581.07" y="229.70" width="3.21" height="1.9" fill="#f92672" opacity="0.38"/>
<rect x="1585.35" y="229.70" width="3.21" height="1.9" fill="#a6e22e" opacity="0.38"/>
<rect x="1588.56" y="229.70" width="1.07" height="1.9" fill="#f8f8f2" opacity="0.38"/>
<rect x="1589.63" y="229.70" width="6.42" height="1.9" fill="#e6db74" opacity="0.38"/>
<rect x="1597.12" y="229.70" width="3.21" height="1.9" fill="#66d9ef" opacity="0.38"/>
<rect x="1580.00" y="231.82" width="5.35" height="1.9" fill="#f8f8f2" opacity="0.38"/>
<rect x="1586.42" y="231.82" width="2.14" height="1.9" fill="#f92672" opacity="0.38"/>
<rect x="1589.63" y="231.82" width="1.07" height="1.9" fill="#f8f8f2" opacity="0.38"/>
<rect x="1591.77" y="231.82" width="8.56" height="1.9" fill="#66d9ef" opacity="0.38"/>
<rect x="1576.00" y="233.94" width="5.35" height="1.9" fill="#f8f8f2" opacity="0.38"/>
<rect x="1582.42" y="233.94" width="4.28" height="1.9" fill="#66d9ef" opacity="0.38"/>
<rect x="1587.77" y="233.94" width="8.56" height="1.9" fill="#66d9ef" opacity="0.38"/>
<rect x="1596.33" y="233.94" width="1.07" height="1.9" fill="#f8f8f2" opacity="0.38"/>
<rect x="1598.47" y="233.94" width="2.14" height="1.9" fill="#66d9ef" opacity="0.38"/>
<rect x="1576.00" y="236.06" width="1.07" height="1.9" fill="#f8f8f2" opacity="0.38"/>
<rect x="1577.07" y="236.06" width="3.21" height="1.9" fill="#f92672" opacity="0.38"/>
<rect x="1581.35" y="236.06" width="5.35" height="1.9" fill="#a6e22e" opacity="0.38"/>
<rect x="1586.70" y="236.06" width="1.07" height="1.9" fill="#f8f8f2" opacity="0.38"/>
<rect x="1587.77" y="236.06" width="12.84" height="1.9" fill="#e6db74" opacity="0.38"/>
<rect x="1580.00" y="242.42" width="5.35" height="1.9" fill="#f8f8f2" opacity="0.38"/>
<rect x="1586.42" y="242.42" width="4.28" height="1.9" fill="#f92672" opacity="0.38"/>
<rect x="1590.70" y="242.42" width="1.07" height="1.9" fill="#f8f8f2" opacity="0.38"/>
<rect x="1592.84" y="242.42" width="7.24" height="1.9" fill="#75715e" opacity="0.38"/>
<rect x="1580.00" y="244.54" width="14.98" height="1.9" fill="#e6db74" opacity="0.38"/>
<rect x="1596.05" y="244.54" width="1.07" height="1.9" fill="#e6db74" opacity="0.38"/>
<rect x="1598.19" y="244.54" width="2.14" height="1.9" fill="#e6db74" opacity="0.38"/>
<rect x="1580.00" y="246.66" width="5.35" height="1.9" fill="#f8f8f2" opacity="0.38"/>
<rect x="1586.42" y="246.66" width="2.14" height="1.9" fill="#f92672" opacity="0.38"/>
<rect x="1588.56" y="246.66" width="1.07" height="1.9" fill="#f8f8f2" opacity="0.38"/>
<rect x="1589.63" y="246.66" width="4.28" height="1.9" fill="#66d9ef" opacity="0.38"/>
<rect x="1593.91" y="246.66" width="6.42" height="1.9" fill="#f8f8f2" opacity="0.38"/>
<rect x="1572.00" y="248.78" width="5.35" height="1.9" fill="#f8f8f2" opacity="0.38"/>
<rect x="1578.42" y="248.78" width="4.28" height="1.9" fill="#66d9ef" opacity="0.38"/>
<rect x="1583.77" y="248.78" width="8.56" height="1.9" fill="#66d9ef" opacity="0.38"/>
<rect x="1592.33" y="248.78" width="1.07" height="1.9" fill="#f8f8f2" opacity="0.38"/>
<rect x="1594.47" y="248.78" width="6.42" height="1.9" fill="#66d9ef" opacity="0.38"/>
<rect x="1572.00" y="250.90" width="5.35" height="1.9" fill="#f8f8f2" opacity="0.38"/>
<rect x="1578.42" y="250.90" width="4.28" height="1.9" fill="#f92672" opacity="0.38"/>
<rect x="1582.70" y="250.90" width="1.07" height="1.9" fill="#f8f8f2" opacity="0.38"/>
<rect x="1584.84" y="250.90" width="15.74" height="1.9" fill="#75715e" opacity="0.38"/>
<rect x="1568.00" y="253.02" width="5.35" height="1.9" fill="#f8f8f2" opacity="0.38"/>
<rect x="1574.42" y="253.02" width="5.35" height="1.9" fill="#f92672" opacity="0.38"/>
<rect x="1579.77" y="253.02" width="1.07" height="1.9" fill="#f8f8f2" opacity="0.38"/>
<rect x="1581.91" y="253.02" width="2.14" height="1.9" fill="#f8f8f2" opacity="0.38"/>
<rect x="1568.00" y="255.14" width="5.35" height="1.9" fill="#f8f8f2" opacity="0.38"/>
<rect x="1574.42" y="255.14" width="2.14" height="1.9" fill="#f92672" opacity="0.38"/>
<rect x="1576.56" y="255.14" width="1.07" height="1.9" fill="#f8f8f2" opacity="0.38"/>
<rect x="1577.63" y="255.14" width="4.28" height="1.9" fill="#66d9ef" opacity="0.38"/>
<rect x="1581.91" y="255.14" width="10.70" height="1.9" fill="#f8f8f2" opacity="0.38"/>
<rect x="1592.61" y="255.14" width="7.49" height="1.9" fill="#e6db74" opacity="0.38"/>
<rect x="1572.00" y="257.26" width="5.35" height="1.9" fill="#f8f8f2" opacity="0.38"/>
<rect x="1578.42" y="257.26" width="4.28" height="1.9" fill="#f92672" opacity="0.38"/>
<rect x="1582.70" y="257.26" width="1.07" height="1.9" fill="#f8f8f2" opacity="0.38"/>
<rect x="1584.84" y="257.26" width="15.74" height="1.9" fill="#75715e" opacity="0.38"/>
<rect x="1572.00" y="259.38" width="2.14" height="1.9" fill="#f92672" opacity="0.38"/>
<rect x="1574.14" y="259.38" width="1.07" height="1.9" fill="#f8f8f2" opacity="0.38"/>
<rect x="1575.21" y="259.38" width="4.28" height="1.9" fill="#66d9ef" opacity="0.38"/>
<rect x="1579.49" y="259.38" width="10.70" height="1.9" fill="#f8f8f2" opacity="0.38"/>
<rect x="1590.19" y="259.38" width="10.70" height="1.9" fill="#e6db74" opacity="0.38"/>
<rect x="1576.00" y="261.50" width="5.35" height="1.9" fill="#f8f8f2" opacity="0.38"/>
<rect x="1582.42" y="261.50" width="4.28" height="1.9" fill="#66d9ef" opacity="0.38"/>
<rect x="1587.77" y="261.50" width="8.56" height="1.9" fill="#66d9ef" opacity="0.38"/>
<rect x="1596.33" y="261.50" width="1.07" height="1.9" fill="#f8f8f2" opacity="0.38"/>
<rect x="1598.47" y="261.50" width="2.14" height="1.9" fill="#66d9ef" opacity="0.38"/>
<rect x="1576.00" y="263.62" width="4.28" height="1.9" fill="#f92672" opacity="0.38"/>
<rect x="1580.28" y="263.62" width="1.07" height="1.9" fill="#f8f8f2" opacity="0.38"/>
<rect x="1576.00" y="265.74" width="5.35" height="1.9" fill="#f8f8f2" opacity="0.38"/>
<rect x="1582.42" y="265.74" width="4.28" height="1.9" fill="#66d9ef" opacity="0.38"/>
<rect x="1587.77" y="265.74" width="8.56" height="1.9" fill="#66d9ef" opacity="0.38"/>
<rect x="1596.33" y="265.74" width="1.07" height="1.9" fill="#f8f8f2" opacity="0.38"/>
<rect x="1598.47" y="265.74" width="2.14" height="1.9" fill="#66d9ef" opacity="0.38"/>
<rect x="1580.00" y="267.86" width="5.35" height="1.9" fill="#f8f8f2" opacity="0.38"/>
<rect x="1586.42" y="267.86" width="2.14" height="1.9" fill="#f92672" opacity="0.38"/>
<rect x="1588.56" y="267.86" width="1.07" height="1.9" fill="#f8f8f2" opacity="0.38"/>
<rect x="1589.63" y="267.86" width="4.28" height="1.9" fill="#66d9ef" opacity="0.38"/>
<rect x="1593.91" y="267.86" width="6.42" height="1.9" fill="#f8f8f2" opacity="0.38"/>
<rect x="1580.00" y="269.98" width="1.07" height="1.9" fill="#f8f8f2" opacity="0.38"/>
<rect x="1581.07" y="269.98" width="3.21" height="1.9" fill="#f92672" opacity="0.38"/>
<rect x="1585.35" y="269.98" width="3.21" height="1.9" fill="#a6e22e" opacity="0.38"/>
<rect x="1588.56" y="269.98" width="1.07" height="1.9" fill="#f8f8f2" opacity="0.38"/>
<rect x="1589.63" y="269.98" width="6.42" height="1.9" fill="#e6db74" opacity="0.38"/>
<rect x="1597.12" y="269.98" width="3.21" height="1.9" fill="#66d9ef" opacity="0.38"/>
<rect x="1580.00" y="272.10" width="5.35" height="1.9" fill="#f8f8f2" opacity="0.38"/>
<rect x="1586.42" y="272.10" width="4.28" height="1.9" fill="#f92672" opacity="0.38"/>
<rect x="1590.70" y="272.10" width="1.07" height="1.9" fill="#f8f8f2" opacity="0.38"/>
<rect x="1592.84" y="272.10" width="7.24" height="1.9" fill="#75715e" opacity="0.38"/>
<rect x="1580.00" y="274.22" width="14.98" height="1.9" fill="#e6db74" opacity="0.38"/>
<rect x="1596.05" y="274.22" width="1.07" height="1.9" fill="#e6db74" opacity="0.38"/>
<rect x="1598.19" y="274.22" width="2.14" height="1.9" fill="#e6db74" opacity="0.38"/>
<rect x="1580.00" y="276.34" width="5.35" height="1.9" fill="#f8f8f2" opacity="0.38"/>
<rect x="1586.42" y="276.34" width="2.14" height="1.9" fill="#f92672" opacity="0.38"/>
<rect x="1588.56" y="276.34" width="1.07" height="1.9" fill="#f8f8f2" opacity="0.38"/>
<rect x="1589.63" y="276.34" width="4.28" height="1.9" fill="#66d9ef" opacity="0.38"/>
<rect x="1593.91" y="276.34" width="6.42" height="1.9" fill="#f8f8f2" opacity="0.38"/>
<rect x="1580.00" y="278.46" width="5.35" height="1.9" fill="#f8f8f2" opacity="0.38"/>
<rect x="1586.42" y="278.46" width="2.14" height="1.9" fill="#f92672" opacity="0.38"/>
<rect x="1588.56" y="278.46" width="1.07" height="1.9" fill="#f8f8f2" opacity="0.38"/>
<rect x="1589.63" y="278.46" width="4.28" height="1.9" fill="#66d9ef" opacity="0.38"/>
<rect x="1593.91" y="278.46" width="6.42" height="1.9" fill="#f8f8f2" opacity="0.38"/>
<rect x="1580.00" y="280.58" width="5.35" height="1.9" fill="#f8f8f2" opacity="0.38"/>
<rect x="1586.42" y="280.58" width="5.35" height="1.9" fill="#f92672" opacity="0.38"/>
<rect x="1591.77" y="280.58" width="1.07" height="1.9" fill="#f8f8f2" opacity="0.38"/>
<rect x="1593.91" y="280.58" width="2.14" height="1.9" fill="#f8f8f2" opacity="0.38"/>
<rect x="1580.00" y="282.70" width="1.07" height="1.9" fill="#f8f8f2" opacity="0.38"/>
<rect x="1581.07" y="282.70" width="3.21" height="1.9" fill="#f92672" opacity="0.38"/>
<rect x="1585.35" y="282.70" width="5.35" height="1.9" fill="#a6e22e" opacity="0.38"/>
<rect x="1590.70" y="282.70" width="1.07" height="1.9" fill="#f8f8f2" opacity="0.38"/>
<rect x="1591.77" y="282.70" width="8.56" height="1.9" fill="#e6db74" opacity="0.38"/>
<rect x="1580.00" y="284.82" width="2.14" height="1.9" fill="#f8f8f2" opacity="0.38"/>
<rect x="1582.14" y="284.82" width="1.07" height="1.9" fill="#f92672" opacity="0.38"/>
<rect x="1583.21" y="284.82" width="3.21" height="1.9" fill="#f8f8f2" opacity="0.38"/>
<rect x="1586.42" y="284.82" width="2.14" height="1.9" fill="#f92672" opacity="0.38"/>
<rect x="1588.56" y="284.82" width="1.07" height="1.9" fill="#f8f8f2" opacity="0.38"/>
<rect x="1576.00" y="286.94" width="14.98" height="1.9" fill="#e6db74" opacity="0.38"/>
<rect x="1592.05" y="286.94" width="1.07" height="1.9" fill="#e6db74" opacity="0.38"/>
<rect x="1594.19" y="286.94" width="2.14" height="1.9" fill="#e6db74" opacity="0.38"/>
<rect x="1597.40" y="286.94" width="3.21" height="1.9" fill="#e6db74" opacity="0.38"/>
<rect x="1576.00" y="289.06" width="2.14" height="1.9" fill="#f8f8f2" opacity="0.38"/>
<rect x="1578.14" y="289.06" width="1.07" height="1.9" fill="#f92672" opacity="0.38"/>
<rect x="1579.21" y="289.06" width="3.21" height="1.9" fill="#f8f8f2" opacity="0.38"/>
<rect x="1582.42" y="289.06" width="2.14" height="1.9" fill="#f92672" opacity="0.38"/>
<rect x="1584.56" y="289.06" width="1.07" height="1.9" fill="#f8f8f2" opacity="0.38"/>
<rect x="1580.00" y="291.18" width="4.28" height="1.9" fill="#75715e" opacity="0.38"/>
<rect x="1585.35" y="291.18" width="13.60" height="1.9" fill="#75715e" opacity="0.38"/>
<rect x="1580.00" y="293.30" width="5.35" height="1.9" fill="#f8f8f2" opacity="0.38"/>
<rect x="1586.42" y="293.30" width="4.28" height="1.9" fill="#66d9ef" opacity="0.38"/>
<rect x="1591.77" y="293.30" width="8.56" height="1.9" fill="#66d9ef" opacity="0.38"/>
<rect x="1580.00" y="295.42" width="1.07" height="1.9" fill="#f8f8f2" opacity="0.38"/>
<rect x="1581.07" y="295.42" width="3.21" height="1.9" fill="#f92672" opacity="0.38"/>
<rect x="1585.35" y="295.42" width="5.35" height="1.9" fill="#a6e22e" opacity="0.38"/>
<rect x="1590.70" y="295.42" width="1.07" height="1.9" fill="#f8f8f2" opacity="0.38"/>
<rect x="1591.77" y="295.42" width="8.56" height="1.9" fill="#e6db74" opacity="0.38"/>
<rect x="1580.00" y="297.54" width="5.35" height="1.9" fill="#f8f8f2" opacity="0.38"/>
<rect x="1586.42" y="297.54" width="2.14" height="1.9" fill="#f92672" opacity="0.38"/>
<rect x="1589.63" y="297.54" width="1.07" height="1.9" fill="#f8f8f2" opacity="0.38"/>
<rect x="1591.77" y="297.54" width="8.56" height="1.9" fill="#66d9ef" opacity="0.38"/>
<rect x="1584.00" y="299.66" width="5.35" height="1.9" fill="#f8f8f2" opacity="0.38"/>
<rect x="1590.42" y="299.66" width="2.14" height="1.9" fill="#f92672" opacity="0.38"/>
<rect x="1592.56" y="299.66" width="1.07" height="1.9" fill="#f8f8f2" opacity="0.38"/>
<rect x="1593.63" y="299.66" width="4.28" height="1.9" fill="#66d9ef" opacity="0.38"/>
<rect x="1597.91" y="299.66" width="2.14" height="1.9" fill="#f8f8f2" opacity="0.38"/>
<rect x="1584.00" y="301.78" width="5.35" height="1.9" fill="#f8f8f2" opacity="0.38"/>
<rect x="1590.42" y="301.78" width="4.28" height="1.9" fill="#f92672" opacity="0.38"/>
<rect x="1594.70" y="301.78" width="1.07" height="1.9" fill="#f8f8f2" opacity="0.38"/>
<rect x="1596.84" y="301.78" width="3.84" height="1.9" fill="#75715e" opacity="0.38"/>
<rect x="1584.00" y="303.90" width="5.35" height="1.9" fill="#f8f8f2" opacity="0.38"/>
<rect x="1590.42" y="303.90" width="2.14" height="1.9" fill="#f92672" opacity="0.38"/>
<rect x="1592.56" y="303.90" width="1.07" height="1.9" fill="#f8f8f2" opacity="0.38"/>
<rect x="1593.63" y="303.90" width="4.28" height="1.9" fill="#66d9ef" opacity="0.38"/>
<rect x="1597.91" y="303.90" width="2.14" height="1.9" fill="#f8f8f2" opacity="0.38"/>
<rect x="1584.00" y="306.02" width="5.35" height="1.9" fill="#f8f8f2" opacity="0.38"/>
<rect x="1590.42" y="306.02" width="2.14" height="1.9" fill="#f92672" opacity="0.38"/>
<rect x="1593.63" y="306.02" width="1.07" height="1.9" fill="#f8f8f2" opacity="0.38"/>
<rect x="1595.77" y="306.02" width="4.28" height="1.9" fill="#66d9ef" opacity="0.38"/>
<rect x="1580.00" y="308.14" width="2.14" height="1.9" fill="#f92672" opacity="0.38"/>
<rect x="1582.14" y="308.14" width="1.07" height="1.9" fill="#f8f8f2" opacity="0.38"/>
<rect x="1583.21" y="308.14" width="4.28" height="1.9" fill="#66d9ef" opacity="0.38"/>
<rect x="1587.49" y="308.14" width="10.70" height="1.9" fill="#f8f8f2" opacity="0.38"/>
<rect x="1598.19" y="308.14" width="2.14" height="1.9" fill="#e6db74" opacity="0.38"/>
<rect x="1580.00" y="310.26" width="5.35" height="1.9" fill="#f8f8f2" opacity="0.38"/>
<rect x="1586.42" y="310.26" width="2.14" height="1.9" fill="#f92672" opacity="0.38"/>
<rect x="1589.63" y="310.26" width="1.07" height="1.9" fill="#f8f8f2" opacity="0.38"/>
<rect x="1591.77" y="310.26" width="8.56" height="1.9" fill="#66d9ef" opacity="0.38"/>
<rect x="1580.00" y="312.38" width="1.07" height="1.9" fill="#f8f8f2" opacity="0.38"/>
<rect x="1581.07" y="312.38" width="1.07" height="1.9" fill="#f92672" opacity="0.38"/>
<rect x="1583.21" y="312.38" width="5.35" height="1.9" fill="#a6e22e" opacity="0.38"/>
<rect x="1588.56" y="312.38" width="1.07" height="1.9" fill="#f8f8f2" opacity="0.38"/>
<rect x="1589.63" y="312.38" width="9.63" height="1.9" fill="#e6db74" opacity="0.38"/>
<rect x="1576.00" y="314.50" width="5.35" height="1.9" fill="#f8f8f2" opacity="0.38"/>
<rect x="1582.42" y="314.50" width="5.35" height="1.9" fill="#f92672" opacity="0.38"/>
<rect x="1587.77" y="314.50" width="1.07" height="1.9" fill="#f8f8f2" opacity="0.38"/>
<rect x="1589.91" y="314.50" width="2.14" height="1.9" fill="#f8f8f2" opacity="0.38"/>
<rect x="1576.00" y="316.62" width="1.07" height="1.9" fill="#f8f8f2" opacity="0.38"/>
<rect x="1577.07" y="316.62" width="3.21" height="1.9" fill="#f92672" opacity="0.38"/>
<rect x="1581.35" y="316.62" width="5.35" height="1.9" fill="#a6e22e" opacity="0.38"/>
<rect x="1586.70" y="316.62" width="1.07" height="1.9" fill="#f8f8f2" opacity="0.38"/>
<rect x="1587.77" y="316.62" width="12.84" height="1.9" fill="#e6db74" opacity="0.38"/>
<rect x="1576.00" y="318.74" width="5.35" height="1.9" fill="#f8f8f2" opacity="0.38"/>
<rect x="1582.42" y="318.74" width="4.28" height="1.9" fill="#f92672" opacity="0.38"/>
<rect x="1586.70" y="318.74" width="1.07" height="1.9" fill="#f8f8f2" opacity="0.38"/>
<rect x="1588.84" y="318.74" width="12.34" height="1.9" fill="#75715e" opacity="0.38"/>
<rect x="1576.00" y="320.86" width="5.35" height="1.9" fill="#f8f8f2" opacity="0.38"/>
<rect x="1582.42" y="320.86" width="2.14" height="1.9" fill="#f92672" opacity="0.38"/>
<rect x="1585.63" y="320.86" width="1.07" height="1.9" fill="#f8f8f2" opacity="0.38"/>
<rect x="1587.77" y="320.86" width="10.70" height="1.9" fill="#66d9ef" opacity="0.38"/>
<rect x="1598.47" y="320.86" width="1.07" height="1.9" fill="#f8f8f2" opacity="0.38"/>
<rect x="1576.00" y="322.98" width="5.35" height="1.9" fill="#f8f8f2" opacity="0.38"/>
<rect x="1582.42" y="322.98" width="2.14" height="1.9" fill="#f92672" opacity="0.38"/>
<rect x="1584.56" y="322.98" width="1.07" height="1.9" fill="#f8f8f2" opacity="0.38"/>
<rect x="1585.63" y="322.98" width="4.28" height="1.9" fill="#66d9ef" opacity="0.38"/>
<rect x="1589.91" y="322.98" width="10.70" height="1.9" fill="#f8f8f2" opacity="0.38"/>
<rect x="1584.00" y="325.10" width="5.35" height="1.9" fill="#f8f8f2" opacity="0.38"/>
<rect x="1590.42" y="325.10" width="5.35" height="1.9" fill="#f92672" opacity="0.38"/>
<rect x="1595.77" y="325.10" width="1.07" height="1.9" fill="#f8f8f2" opacity="0.38"/>
<rect x="1597.91" y="325.10" width="2.14" height="1.9" fill="#f8f8f2" opacity="0.38"/>
<rect x="1584.00" y="327.22" width="6.42" height="1.9" fill="#f92672" opacity="0.38"/>
<rect x="1591.49" y="327.22" width="1.07" height="1.9" fill="#f8f8f2" opacity="0.38"/>
<rect x="1593.63" y="327.22" width="6.42" height="1.9" fill="#66d9ef" opacity="0.38"/>
<rect x="1584.00" y="329.34" width="2.14" height="1.9" fill="#f92672" opacity="0.38"/>
<rect x="1586.14" y="329.34" width="1.07" height="1.9" fill="#f8f8f2" opacity="0.38"/>
<rect x="1587.21" y="329.34" width="4.28" height="1.9" fill="#66d9ef" opacity="0.38"/>
<rect x="1591.49" y="329.34" width="8.56" height="1.9" fill="#f8f8f2" opacity="0.38"/>
<rect x="1584.00" y="331.46" width="5.35" height="1.9" fill="#f8f8f2" opacity="0.38"/>
<rect x="1590.42" y="331.46" width="4.28" height="1.9" fill="#f92672" opacity="0.38"/>
<rect x="1594.70" y="331.46" width="1.07" height="1.9" fill="#f8f8f2" opacity="0.38"/>
<rect x="1596.84" y="331.46" width="3.84" height="1.9" fill="#75715e" opacity="0.38"/>
<rect x="1584.00" y="333.58" width="5.35" height="1.9" fill="#f8f8f2" opacity="0.38"/>
<rect x="1590.42" y="333.58" width="4.28" height="1.9" fill="#66d9ef" opacity="0.38"/>
<rect x="1595.77" y="333.58" width="4.28" height="1.9" fill="#66d9ef" opacity="0.38"/>
<rect x="1584.00" y="335.70" width="14.98" height="1.9" fill="#e6db74" opacity="0.38"/>
<rect x="1580.00" y="337.82" width="5.35" height="1.9" fill="#f8f8f2" opacity="0.38"/>
<rect x="1586.42" y="337.82" width="4.28" height="1.9" fill="#f92672" opacity="0.38"/>
<rect x="1590.70" y="337.82" width="1.07" height="1.9" fill="#f8f8f2" opacity="0.38"/>
<rect x="1592.84" y="337.82" width="7.24" height="1.9" fill="#75715e" opacity="0.38"/>
<rect x="1580.00" y="339.94" width="5.35" height="1.9" fill="#f8f8f2" opacity="0.38"/>
<rect x="1586.42" y="339.94" width="4.28" height="1.9" fill="#66d9ef" opacity="0.38"/>
<rect x="1591.77" y="339.94" width="8.56" height="1.9" fill="#66d9ef" opacity="0.38"/>
<rect x="1572.00" y="346.30" width="5.35" height="1.9" fill="#f8f8f2" opacity="0.38"/>
<rect x="1578.42" y="346.30" width="2.14" height="1.9" fill="#f92672" opacity="0.38"/>
<rect x="1580.56" y="346.30" width="1.07" height="1.9" fill="#f8f8f2" opacity="0.38"/>
<rect x="1581.63" y="346.30" width="4.28" height="1.9" fill="#66d9ef" opacity="0.38"/>
<rect x="1585.91" y="346.30" width="10.70" height="1.9" fill="#f8f8f2" opacity="0.38"/>
<rect x="1596.61" y="346.30" width="4.28" height="1.9" fill="#e6db74" opacity="0.38"/>
<rect x="1572.00" y="348.42" width="5.35" height="1.9" fill="#f8f8f2" opacity="0.38"/>
<rect x="1578.42" y="348.42" width="2.14" height="1.9" fill="#f92672" opacity="0.38"/>
<rect x="1580.56" y="348.42" width="1.07" height="1.9" fill="#f8f8f2" opacity="0.38"/>
<rect x="1581.63" y="348.42" width="4.28" height="1.9" fill="#66d9ef" opacity="0.38"/>
<rect x="1585.91" y="348.42" width="10.70" height="1.9" fill="#f8f8f2" opacity="0.38"/>
<rect x="1596.61" y="348.42" width="4.28" height="1.9" fill="#e6db74" opacity="0.38"/>
<rect x="1576.00" y="350.54" width="2.14" height="1.9" fill="#f92672" opacity="0.38"/>
<rect x="1578.14" y="350.54" width="1.07" height="1.9" fill="#f8f8f2" opacity="0.38"/>
<rect x="1579.21" y="350.54" width="4.28" height="1.9" fill="#66d9ef" opacity="0.38"/>
<rect x="1583.49" y="350.54" width="10.70" height="1.9" fill="#f8f8f2" opacity="0.38"/>
<rect x="1594.19" y="350.54" width="6.42" height="1.9" fill="#e6db74" opacity="0.38"/>
<rect x="1576.00" y="352.66" width="4.28" height="1.9" fill="#75715e" opacity="0.38"/>
<rect x="1581.35" y="352.66" width="13.60" height="1.9" fill="#75715e" opacity="0.38"/>
<rect x="1596.02" y="352.66" width="3.21" height="1.9" fill="#75715e" opacity="0.38"/>
<rect x="1576.00" y="354.78" width="1.07" height="1.9" fill="#f8f8f2" opacity="0.38"/>
<rect x="1577.07" y="354.78" width="1.07" height="1.9" fill="#f92672" opacity="0.38"/>
<rect x="1579.21" y="354.78" width="5.35" height="1.9" fill="#a6e22e" opacity="0.38"/>
<rect x="1584.56" y="354.78" width="1.07" height="1.9" fill="#f8f8f2" opacity="0.38"/>
<rect x="1585.63" y="354.78" width="9.63" height="1.9" fill="#e6db74" opacity="0.38"/>
<rect x="1596.33" y="354.78" width="4.28" height="1.9" fill="#e6db74" opacity="0.38"/>
<rect x="1576.00" y="356.90" width="4.28" height="1.9" fill="#75715e" opacity="0.38"/>
<rect x="1581.35" y="356.90" width="13.60" height="1.9" fill="#75715e" opacity="0.38"/>
<rect x="1596.02" y="356.90" width="3.21" height="1.9" fill="#75715e" opacity="0.38"/>
<rect x="1576.00" y="359.02" width="2.14" height="1.9" fill="#f92672" opacity="0.38"/>
<rect x="1578.14" y="359.02" width="1.07" height="1.9" fill="#f8f8f2" opacity="0.38"/>
<rect x="1579.21" y="359.02" width="4.28" height="1.9" fill="#66d9ef" opacity="0.38"/>
<rect x="1583.49" y="359.02" width="10.70" height="1.9" fill="#f8f8f2" opacity="0.38"/>
<rect x="1594.19" y="359.02" width="6.42" height="1.9" fill="#e6db74" opacity="0.38"/>
<rect x="1580.00" y="361.14" width="4.28" height="1.9" fill="#f92672" opacity="0.38"/>
<rect x="1584.28" y="361.14" width="1.07" height="1.9" fill="#f8f8f2" opacity="0.38"/>
<rect x="1580.00" y="363.26" width="1.07" height="1.9" fill="#f8f8f2" opacity="0.38"/>
<rect x="1581.07" y="363.26" width="3.21" height="1.9" fill="#f92672" opacity="0.38"/>
<rect x="1585.35" y="363.26" width="5.35" height="1.9" fill="#a6e22e" opacity="0.38"/>
<rect x="1590.70" y="363.26" width="1.07" height="1.9" fill="#f8f8f2" opacity="0.38"/>
<rect x="1591.77" y="363.26" width="8.56" height="1.9" fill="#e6db74" opacity="0.38"/>
<rect x="1580.00" y="365.38" width="5.35" height="1.9" fill="#f8f8f2" opacity="0.38"/>
<rect x="1586.42" y="365.38" width="4.28" height="1.9" fill="#66d9ef" opacity="0.38"/>
<rect x="1591.77" y="365.38" width="8.56" height="1.9" fill="#66d9ef" opacity="0.38"/>
<rect x="1584.00" y="367.50" width="5.35" height="1.9" fill="#f8f8f2" opacity="0.38"/>
<rect x="1590.42" y="367.50" width="2.14" height="1.9" fill="#f92672" opacity="0.38"/>
<rect x="1592.56" y="367.50" width="1.07" height="1.9" fill="#f8f8f2" opacity="0.38"/>
<rect x="1593.63" y="367.50" width="4.28" height="1.9" fill="#66d9ef" opacity="0.38"/>
<rect x="1597.91" y="367.50" width="2.14" height="1.9" fill="#f8f8f2" opacity="0.38"/>
<rect x="1584.00" y="369.62" width="5.35" height="1.9" fill="#f8f8f2" opacity="0.38"/>
<rect x="1590.42" y="369.62" width="2.14" height="1.9" fill="#f92672" opacity="0.38"/>
<rect x="1593.63" y="369.62" width="1.07" height="1.9" fill="#f8f8f2" opacity="0.38"/>
<rect x="1595.77" y="369.62" width="4.28" height="1.9" fill="#66d9ef" opacity="0.38"/>
<rect x="1588.00" y="371.74" width="2.14" height="1.9" fill="#f8f8f2" opacity="0.38"/>
<rect x="1590.14" y="371.74" width="1.07" height="1.9" fill="#f92672" opacity="0.38"/>
<rect x="1591.21" y="371.74" width="3.21" height="1.9" fill="#f8f8f2" opacity="0.38"/>
<rect x="1594.42" y="371.74" width="1.07" height="1.9" fill="#f92672" opacity="0.38"/>
<rect x="1595.49" y="371.74" width="1.07" height="1.9" fill="#f8f8f2" opacity="0.38"/>
<rect x="1588.00" y="373.86" width="5.35" height="1.9" fill="#f8f8f2" opacity="0.38"/>
<rect x="1594.42" y="373.86" width="4.28" height="1.9" fill="#66d9ef" opacity="0.38"/>
<rect x="1599.77" y="373.86" width="1.07" height="1.9" fill="#66d9ef" opacity="0.38"/>
<rect x="1588.00" y="375.98" width="2.14" height="1.9" fill="#f92672" opacity="0.38"/>
<rect x="1592.28" y="375.98" width="1.07" height="1.9" fill="#f8f8f2" opacity="0.38"/>
<rect x="1594.42" y="375.98" width="6.42" height="1.9" fill="#66d9ef" opacity="0.38"/>
<rect x="1588.00" y="378.10" width="5.35" height="1.9" fill="#f8f8f2" opacity="0.38"/>
<rect x="1594.42" y="378.10" width="2.14" height="1.9" fill="#f92672" opacity="0.38"/>
<rect x="1596.56" y="378.10" width="1.07" height="1.9" fill="#f8f8f2" opacity="0.38"/>
<rect x="1597.63" y="378.10" width="3.21" height="1.9" fill="#66d9ef" opacity="0.38"/>
<rect x="1584.00" y="380.22" width="5.35" height="1.9" fill="#f8f8f2" opacity="0.38"/>
<rect x="1590.42" y="380.22" width="4.28" height="1.9" fill="#66d9ef" opacity="0.38"/>
<rect x="1595.77" y="380.22" width="4.28" height="1.9" fill="#66d9ef" opacity="0.38"/>
<rect x="1584.00" y="382.34" width="1.07" height="1.9" fill="#f8f8f2" opacity="0.38"/>
<rect x="1585.07" y="382.34" width="3.21" height="1.9" fill="#f92672" opacity="0.38"/>
<rect x="1589.35" y="382.34" width="5.35" height="1.9" fill="#a6e22e" opacity="0.38"/>
<rect x="1594.70" y="382.34" width="1.07" height="1.9" fill="#f8f8f2" opacity="0.38"/>
<rect x="1595.77" y="382.34" width="4.28" height="1.9" fill="#e6db74" opacity="0.38"/>
<rect x="1580.00" y="384.46" width="5.35" height="1.9" fill="#f8f8f2" opacity="0.38"/>
<rect x="1586.42" y="384.46" width="2.14" height="1.9" fill="#f92672" opacity="0.38"/>
<rect x="1589.63" y="384.46" width="1.07" height="1.9" fill="#f8f8f2" opacity="0.38"/>
<rect x="1591.77" y="384.46" width="8.56" height="1.9" fill="#66d9ef" opacity="0.38"/>
<rect x="1580.00" y="386.58" width="5.35" height="1.9" fill="#f8f8f2" opacity="0.38"/>
<rect x="1586.42" y="386.58" width="2.14" height="1.9" fill="#f92672" opacity="0.38"/>
<rect x="1588.56" y="386.58" width="1.07" height="1.9" fill="#f8f8f2" opacity="0.38"/>
<rect x="1589.63" y="386.58" width="4.28" height="1.9" fill="#66d9ef" opacity="0.38"/>
<rect x="1593.91" y="386.58" width="6.42" height="1.9" fill="#f8f8f2" opacity="0.38"/>
<rect x="1580.00" y="388.70" width="4.28" height="1.9" fill="#f92672" opacity="0.38"/>
<rect x="1584.28" y="388.70" width="1.07" height="1.9" fill="#f8f8f2" opacity="0.38"/>
<rect x="1584.00" y="390.82" width="5.35" height="1.9" fill="#f8f8f2" opacity="0.38"/>
<rect x="1590.42" y="390.82" width="4.28" height="1.9" fill="#66d9ef" opacity="0.38"/>
<rect x="1595.77" y="390.82" width="4.28" height="1.9" fill="#66d9ef" opacity="0.38"/>
<rect x="1584.00" y="392.94" width="5.35" height="1.9" fill="#f8f8f2" opacity="0.38"/>
<rect x="1590.42" y="392.94" width="2.14" height="1.9" fill="#f92672" opacity="0.38"/>
<rect x="1593.63" y="392.94" width="1.07" height="1.9" fill="#f8f8f2" opacity="0.38"/>
<rect x="1595.77" y="392.94" width="4.28" height="1.9" fill="#66d9ef" opacity="0.38"/>
<rect x="1588.00" y="395.06" width="1.07" height="1.9" fill="#f8f8f2" opacity="0.38"/>
<rect x="1589.07" y="395.06" width="2.14" height="1.9" fill="#f92672" opacity="0.38"/>
<rect x="1592.28" y="395.06" width="5.35" height="1.9" fill="#a6e22e" opacity="0.38"/>
<rect x="1597.63" y="395.06" width="1.07" height="1.9" fill="#f8f8f2" opacity="0.38"/>
<rect x="1598.70" y="395.06" width="2.14" height="1.9" fill="#e6db74" opacity="0.38"/>
<rect x="1588.00" y="397.18" width="2.14" height="1.9" fill="#f8f8f2" opacity="0.38"/>
<rect x="1590.14" y="397.18" width="1.07" height="1.9" fill="#f92672" opacity="0.38"/>
<rect x="1591.21" y="397.18" width="3.21" height="1.9" fill="#f8f8f2" opacity="0.38"/>
<rect x="1594.42" y="397.18" width="2.14" height="1.9" fill="#f92672" opacity="0.38"/>
<rect x="1596.56" y="397.18" width="1.07" height="1.9" fill="#f8f8f2" opacity="0.38"/>
<rect x="1584.00" y="399.30" width="5.35" height="1.9" fill="#f8f8f2" opacity="0.38"/>
<rect x="1590.42" y="399.30" width="1.07" height="1.9" fill="#f8f8f2" opacity="0.38"/>
<rect x="1592.56" y="399.30" width="2.14" height="1.9" fill="#f8f8f2" opacity="0.38"/>
<rect x="1584.00" y="401.42" width="5.35" height="1.9" fill="#f8f8f2" opacity="0.38"/>
<rect x="1590.42" y="401.42" width="1.07" height="1.9" fill="#f8f8f2" opacity="0.38"/>
<rect x="1592.56" y="401.42" width="2.14" height="1.9" fill="#f8f8f2" opacity="0.38"/>
<rect x="1580.00" y="403.54" width="5.35" height="1.9" fill="#f8f8f2" opacity="0.38"/>
<rect x="1586.42" y="403.54" width="2.14" height="1.9" fill="#f92672" opacity="0.38"/>
<rect x="1588.56" y="403.54" width="1.07" height="1.9" fill="#f8f8f2" opacity="0.38"/>
<rect x="1589.63" y="403.54" width="4.28" height="1.9" fill="#66d9ef" opacity="0.38"/>
<rect x="1593.91" y="403.54" width="6.42" height="1.9" fill="#f8f8f2" opacity="0.38"/>
<rect x="1580.00" y="405.66" width="4.28" height="1.9" fill="#75715e" opacity="0.38"/>
<rect x="1585.35" y="405.66" width="13.60" height="1.9" fill="#75715e" opacity="0.38"/>
<rect x="1576.00" y="407.78" width="1.07" height="1.9" fill="#f8f8f2" opacity="0.38"/>
<rect x="1577.07" y="407.78" width="3.21" height="1.9" fill="#f92672" opacity="0.38"/>
<rect x="1581.35" y="407.78" width="5.35" height="1.9" fill="#a6e22e" opacity="0.38"/>
<rect x="1586.70" y="407.78" width="1.07" height="1.9" fill="#f8f8f2" opacity="0.38"/>
<rect x="1587.77" y="407.78" width="12.84" height="1.9" fill="#e6db74" opacity="0.38"/>
<rect x="1576.00" y="409.90" width="5.35" height="1.9" fill="#f8f8f2" opacity="0.38"/>
<rect x="1582.42" y="409.90" width="2.14" height="1.9" fill="#f92672" opacity="0.38"/>
<rect x="1584.56" y="409.90" width="1.07" height="1.9" fill="#f8f8f2" opacity="0.38"/>
<rect x="1585.63" y="409.90" width="4.28" height="1.9" fill="#66d9ef" opacity="0.38"/>
<rect x="1589.91" y="409.90" width="10.70" height="1.9" fill="#f8f8f2" opacity="0.38"/>
<rect x="1576.00" y="412.02" width="5.35" height="1.9" fill="#f8f8f2" opacity="0.38"/>
<rect x="1582.42" y="412.02" width="1.07" height="1.9" fill="#f8f8f2" opacity="0.38"/>
<rect x="1584.56" y="412.02" width="2.14" height="1.9" fill="#f8f8f2" opacity="0.38"/>
<rect x="1572.00" y="414.14" width="5.35" height="1.9" fill="#f8f8f2" opacity="0.38"/>
<rect x="1578.42" y="414.14" width="4.28" height="1.9" fill="#f92672" opacity="0.38"/>
<rect x="1582.70" y="414.14" width="1.07" height="1.9" fill="#f8f8f2" opacity="0.38"/>
<rect x="1584.84" y="414.14" width="15.74" height="1.9" fill="#75715e" opacity="0.38"/>
<rect x="1572.00" y="416.26" width="1.07" height="1.9" fill="#f8f8f2" opacity="0.38"/>
<rect x="1573.07" y="416.26" width="1.07" height="1.9" fill="#f92672" opacity="0.38"/>
<rect x="1575.21" y="416.26" width="5.35" height="1.9" fill="#a6e22e" opacity="0.38"/>
<rect x="1580.56" y="416.26" width="1.07" height="1.9" fill="#f8f8f2" opacity="0.38"/>
<rect x="1581.63" y="416.26" width="9.63" height="1.9" fill="#e6db74" opacity="0.38"/>
<rect x="1592.33" y="416.26" width="8.56" height="1.9" fill="#e6db74" opacity="0.38"/>
<rect x="1568.00" y="418.38" width="1.07" height="1.9" fill="#f8f8f2" opacity="0.38"/>
<rect x="1569.07" y="418.38" width="2.14" height="1.9" fill="#f92672" opacity="0.38"/>
<rect x="1572.28" y="418.38" width="5.35" height="1.9" fill="#a6e22e" opacity="0.38"/>
<rect x="1577.63" y="418.38" width="1.07" height="1.9" fill="#f8f8f2" opacity="0.38"/>
<rect x="1578.70" y="418.38" width="9.63" height="1.9" fill="#e6db74" opacity="0.38"/>
<rect x="1589.40" y="418.38" width="10.70" height="1.9" fill="#e6db74" opacity="0.38"/>
<rect x="1568.00" y="420.50" width="5.35" height="1.9" fill="#f8f8f2" opacity="0.38"/>
<rect x="1574.42" y="420.50" width="4.28" height="1.9" fill="#f92672" opacity="0.38"/>
<rect x="1578.70" y="420.50" width="1.07" height="1.9" fill="#f8f8f2" opacity="0.38"/>
<rect x="1580.84" y="420.50" width="19.14" height="1.9" fill="#75715e" opacity="0.38"/>
<rect x="1564.00" y="422.62" width="5.35" height="1.9" fill="#f8f8f2" opacity="0.38"/>
<rect x="1570.42" y="422.62" width="4.28" height="1.9" fill="#f92672" opacity="0.38"/>
<rect x="1574.70" y="422.62" width="1.07" height="1.9" fill="#f8f8f2" opacity="0.38"/>
<rect x="1576.84" y="422.62" width="15.74" height="1.9" fill="#75715e" opacity="0.38"/>
<rect x="1593.65" y="422.62" width="2.14" height="1.9" fill="#f8f8f2" opacity="0.38"/>
<rect x="1564.00" y="424.74" width="1.07" height="1.9" fill="#f8f8f2" opacity="0.38"/>
<rect x="1565.07" y="424.74" width="1.07" height="1.9" fill="#f92672" opacity="0.38"/>
<rect x="1567.21" y="424.74" width="5.35" height="1.9" fill="#a6e22e" opacity="0.38"/>
<rect x="1572.56" y="424.74" width="1.07" height="1.9" fill="#f8f8f2" opacity="0.38"/>
<rect x="1573.63" y="424.74" width="9.63" height="1.9" fill="#e6db74" opacity="0.38"/>
<rect x="1584.33" y="424.74" width="14.98" height="1.9" fill="#e6db74" opacity="0.38"/>
<rect x="1599.31" y="424.74" width="1.07" height="1.9" fill="#f8f8f2" opacity="0.38"/>
<rect x="1560.00" y="426.86" width="5.35" height="1.9" fill="#f8f8f2" opacity="0.38"/>
<rect x="1566.42" y="426.86" width="5.35" height="1.9" fill="#f92672" opacity="0.38"/>
<rect x="1571.77" y="426.86" width="1.07" height="1.9" fill="#f8f8f2" opacity="0.38"/>
<rect x="1573.91" y="426.86" width="2.14" height="1.9" fill="#f8f8f2" opacity="0.38"/>
<rect x="1560.00" y="428.98" width="5.35" height="1.9" fill="#f8f8f2" opacity="0.38"/>
<rect x="1566.42" y="428.98" width="4.28" height="1.9" fill="#66d9ef" opacity="0.38"/>
<rect x="1571.77" y="428.98" width="8.56" height="1.9" fill="#66d9ef" opacity="0.38"/>
<rect x="1580.33" y="428.98" width="1.07" height="1.9" fill="#f8f8f2" opacity="0.38"/>
<rect x="1582.47" y="428.98" width="12.84" height="1.9" fill="#66d9ef" opacity="0.38"/>
<rect x="1595.31" y="428.98" width="1.07" height="1.9" fill="#f8f8f2" opacity="0.38"/>
<rect x="1597.45" y="428.98" width="3.21" height="1.9" fill="#e6db74" opacity="0.38"/>
</svg>
<div id="bottom"></div>
</body></html>
